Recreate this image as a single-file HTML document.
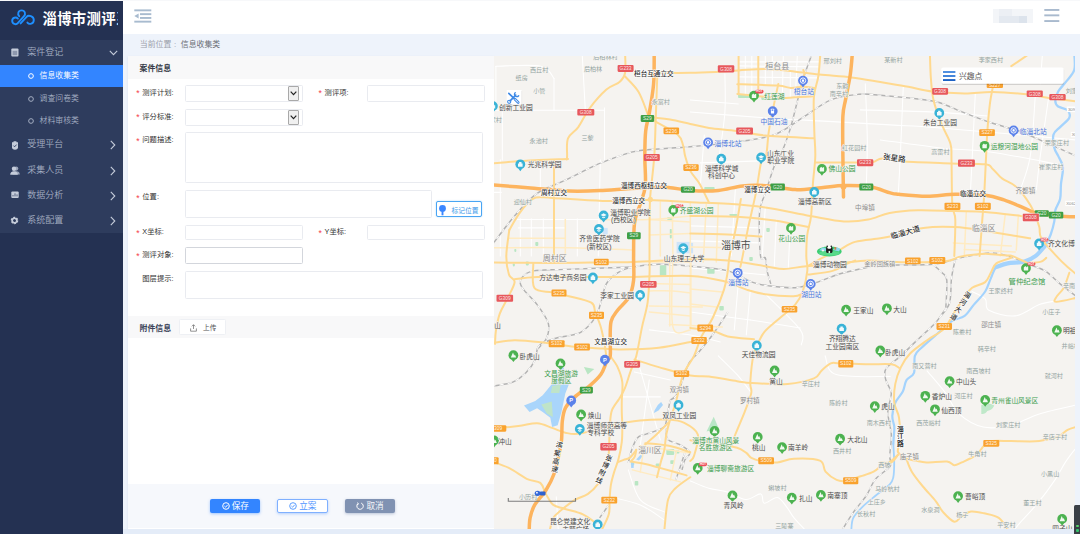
<!DOCTYPE html>
<html lang="zh-CN">
<head>
<meta charset="utf-8">
<title>淄博市测评系统</title>
<style>
*{box-sizing:border-box;margin:0;padding:0}
html,body{width:1080px;height:534px;overflow:hidden;background:#eef3fb;font-family:"Liberation Sans","Noto Sans CJK SC",sans-serif;color:#333}
.abs{position:absolute}
#side{position:absolute;left:0;top:0;width:122.7px;height:534px;background:#243152;overflow:hidden}
#logo{position:absolute;left:0;top:1px;width:122.7px;height:38.5px;background:#243152}
#logo .t{position:absolute;left:42.4px;top:6.9px;width:75.6px;overflow:hidden;font-size:14.4px;font-weight:bold;color:#fff;white-space:nowrap;letter-spacing:0.35px;line-height:22px}
.mi{position:absolute;left:0;width:122.7px;height:25.3px;background:#2e3c5d;color:#a3adc1;font-weight:350;font-size:9px;line-height:25.3px}
.mi .tx{position:absolute;left:27.3px;top:0.2px;white-space:nowrap}
.mi svg.ic{position:absolute;left:10.8px;top:8.4px}
.mi svg.ar{position:absolute;left:108.6px;top:10.6px}
.si{position:absolute;left:0;width:122.7px;height:22.5px;background:#2e3c5d;color:#a3adc1;font-weight:350;font-size:7.9px;line-height:22.5px}
.si .tx{position:absolute;left:39.5px;top:0.3px;white-space:nowrap}
.si svg{position:absolute;left:26.5px;top:7.3px}
.si.on{background:#3385ff;color:#fff}

#head{position:absolute;left:122.7px;top:0;width:957.3px;height:33.8px;background:#fff;border-top:1px solid #f4f4f4}
#crumb{position:absolute;left:139.8px;top:34.4px;height:22px;line-height:21.5px;font-size:7.9px;color:#9aa0aa;white-space:nowrap}
#crumb b{font-weight:normal;color:#6b6f76}
#card{position:absolute;left:128px;top:56.2px;width:365.8px;height:472.4px;background:#fff;box-shadow:0 1px 2px rgba(120,140,180,.18)}
.ch{position:absolute;left:0;width:365.8px;background:#f8f8f9;font-size:7.9px;font-weight:bold;color:#363b47}
.ch span{position:absolute;left:11.5px;white-space:nowrap}
.lb{position:absolute;font-size:7.3px;color:#2f2f2f;white-space:nowrap;line-height:10px;margin-top:0.5px}
.lb em{position:absolute;left:-6px;top:0.6px;color:#f5404a;font-style:normal;font-size:8.6px}
.in{position:absolute;background:#fff;border:1px solid #e9ebf0;border-radius:1.5px}
.dd{position:absolute;width:11px;height:15.4px;right:2.4px;top:0px;background:#f0f0f0;border:1px solid #a9a9a9;border-radius:1px}
.btn{position:absolute;height:14.8px;border-radius:2px;font-size:8.6px;line-height:14.6px;text-align:center;white-space:nowrap}
</style>
</head>
<body>
<!-- SIDEBAR -->
<div class="abs" style="left:0;top:0;width:1080px;height:1px;background:#f7f8fa;z-index:5"></div>
<div id="side">
  <div id="logo">
    <svg class="abs" style="left:10.5px;top:8px" width="24" height="17" viewBox="0 0 24 17"><g fill="none" stroke="#1e8fff" stroke-width="1.9" stroke-linecap="round" stroke-linejoin="round"><path d="M8.2 7.2 C6.2 5 7.2 1.4 10.6 1.4 C14 1.4 15 5 13 7.2 L6.8 14.2 C5.2 16 1.2 15.2 1.2 11.8 C1.2 8.6 5 7.6 6.9 9.6"/><path d="M9.6 14.4 L15.6 7.8 C17.4 5.8 22.8 7 22.8 11 C22.8 15 18.2 15.8 16.4 13.6"/></g></svg>
    <div class="t">淄博市测评系统</div>
  </div>
  <div class="mi" style="top:39.5px"><svg class="ic" width="8" height="9" viewBox="0 0 8 9"><rect x="0.3" y="0.6" width="7.2" height="8" rx="1" fill="#c5ccda"/><rect x="1.6" y="2.8" width="4.6" height="4.4" fill="#8d97ad"/></svg><span class="tx">案件登记</span><svg class="ar" width="9" height="6" viewBox="0 0 9 6"><path d="M0.8 0.8 L4.5 4.6 L8.2 0.8" fill="none" stroke="#c5ccda" stroke-width="1.1"/></svg></div>
  <div class="si on" style="top:64.8px"><svg width="8" height="8" viewBox="0 0 8 8"><circle cx="4" cy="4" r="2.35" fill="none" stroke="#fff" stroke-width="1"/></svg><span class="tx">信息收集类</span></div>
  <div class="si" style="top:87.3px"><svg width="8" height="8" viewBox="0 0 8 8"><circle cx="4" cy="4" r="2.35" fill="none" stroke="#a3adc1" stroke-width="1"/></svg><span class="tx">调查问卷类</span></div>
  <div class="si" style="top:109.8px;height:22.6px"><svg width="8" height="8" viewBox="0 0 8 8"><circle cx="4" cy="4" r="2.35" fill="none" stroke="#a3adc1" stroke-width="1"/></svg><span class="tx">材料审核类</span></div>
  <div class="mi" style="top:132.3px"><svg class="ic" width="8" height="9" viewBox="0 0 8 9"><path d="M1 1.2 h6 v5 q0 2.4 -3 2.6 q-3 -.2 -3 -2.6z" fill="#c5ccda"/><rect x="2.4" y="0.2" width="3.2" height="1.8" rx=".6" fill="#c5ccda"/><path d="M2.4 4.6 l1.2 1.2 l2 -2.2" stroke="#2e3c5d" stroke-width=".9" fill="none"/></svg><span class="tx">受理平台</span><svg class="ar" style="left:110px;top:8px" width="6" height="10" viewBox="0 0 6 10"><path d="M0.8 0.8 L4.8 5 L0.8 9.2" fill="none" stroke="#c5ccda" stroke-width="1.1"/></svg></div>
  <div class="mi" style="top:157.6px"><svg class="ic" style="left:9.5px" width="10" height="9" viewBox="0 0 10 9"><circle cx="6.2" cy="2.6" r="2.1" fill="#9aa4b9"/><path d="M2.6 8.6 q0 -3.4 3.6 -3.4 q3.6 0 3.6 3.4z" fill="#9aa4b9"/><circle cx="4" cy="2.8" r="2.2" fill="#c5ccda"/><path d="M0.2 8.8 q0 -3.6 3.8 -3.6 q3.8 0 3.8 3.6z" fill="#c5ccda"/></svg><span class="tx">采集人员</span><svg class="ar" style="left:110px;top:8px" width="6" height="10" viewBox="0 0 6 10"><path d="M0.8 0.8 L4.8 5 L0.8 9.2" fill="none" stroke="#c5ccda" stroke-width="1.1"/></svg></div>
  <div class="mi" style="top:182.9px"><svg class="ic" style="top:8.6px" width="8" height="8" viewBox="0 0 8 8"><rect x="0.3" y="0.5" width="7.4" height="6.6" rx="1" fill="#c5ccda"/><path d="M2 5.4 v-1.4 M4 5.4 v-3 M6 5.4 v-2" stroke="#55617d" stroke-width="1"/></svg><span class="tx">数据分析</span><svg class="ar" style="left:110px;top:8px" width="6" height="10" viewBox="0 0 6 10"><path d="M0.8 0.8 L4.8 5 L0.8 9.2" fill="none" stroke="#c5ccda" stroke-width="1.1"/></svg></div>
  <div class="mi" style="top:208.2px"><svg class="ic" style="left:9.6px;top:8px" width="9" height="9" viewBox="0 0 9 9"><circle cx="4.5" cy="4.5" r="2.7" fill="none" stroke="#c5ccda" stroke-width="2.2" stroke-dasharray="1.6 1.23"/><circle cx="4.5" cy="4.5" r="2.3" fill="none" stroke="#c5ccda" stroke-width="1.6"/></svg><span class="tx">系统配置</span><svg class="ar" style="left:110px;top:8px" width="6" height="10" viewBox="0 0 6 10"><path d="M0.8 0.8 L4.8 5 L0.8 9.2" fill="none" stroke="#c5ccda" stroke-width="1.1"/></svg></div>
</div>

<!-- HEADER -->
<div id="head">
  <svg class="abs" style="left:11.5px;top:8.4px" width="18" height="14" viewBox="0 0 18 14"><g fill="#a8bbcf"><rect x="0.3" y="0.4" width="17" height="1.9"/><rect x="6" y="4.2" width="11.3" height="1.9"/><rect x="6" y="8" width="11.3" height="1.9"/><rect x="0.3" y="11.7" width="17" height="1.9"/><path d="M0.3 7 L4.6 4.4 L4.6 9.6z"/></g></svg>
  <div class="abs" style="left:870.2px;top:8.4px;width:40.5px;height:13.6px;background:#f3f5f8"></div>
  <div class="abs" style="left:876.7px;top:8.4px;width:12.6px;height:6.6px;background:#eceff4"></div>
  <div class="abs" style="left:876.7px;top:15px;width:27.3px;height:7px;background:#e4e9f0"></div>
  <div class="abs" style="left:896.7px;top:15px;width:7.3px;height:7px;background:#dce3ec"></div>
  <svg class="abs" style="left:921.5px;top:6.8px" width="16" height="15" viewBox="0 0 16 15"><g fill="#a9bace"><rect x="0.3" y="1" width="15" height="1.9"/><rect x="0.3" y="6.4" width="15" height="1.9"/><rect x="0.3" y="12.1" width="15" height="1.9"/></g></svg>
</div>
<div id="crumb">当前位置<span style="margin:0 4.6px 0 2.6px">:</span><b>信息收集类</b></div>

<!-- FORM CARD -->
<div id="card">
  <div class="ch" style="top:0;height:22.4px;line-height:22.4px"><span style="top:1.6px">案件信息</span></div>
  <div class="lb" style="left:14.3px;top:31.2px"><em>*</em>测评计划:</div>
  <div class="in" style="left:56.6px;top:28.9px;width:118px;height:16.8px"><div class="dd"><svg class="abs" style="left:1.2px;top:4.4px" width="7" height="5" viewBox="0 0 7 5"><path d="M0.7 0.7 L3.5 3.6 L6.3 0.7" fill="none" stroke="#222" stroke-width="1.2"/></svg></div></div>
  <div class="lb" style="left:196.6px;top:31.2px"><em>*</em>测评项:</div>
  <div class="in" style="left:239.3px;top:28.9px;width:118.2px;height:16.8px"></div>
  <div class="lb" style="left:14.3px;top:55.1px"><em>*</em>评分标准:</div>
  <div class="in" style="left:56.6px;top:52.8px;width:118px;height:16.8px"><div class="dd"><svg class="abs" style="left:1.2px;top:4.4px" width="7" height="5" viewBox="0 0 7 5"><path d="M0.7 0.7 L3.5 3.6 L6.3 0.7" fill="none" stroke="#222" stroke-width="1.2"/></svg></div></div>
  <div class="lb" style="left:14.3px;top:78.8px"><em>*</em>问题描述:</div>
  <div class="in" style="left:56.6px;top:76px;width:298.4px;height:50.8px"></div>
  <div class="lb" style="left:14.3px;top:135.8px"><em>*</em>位置:</div>
  <div class="in" style="left:56.6px;top:133.8px;width:247.2px;height:28px"></div>
  <div class="btn" style="left:308.1px;top:144.9px;width:45.7px;height:16.2px;border:1px solid #49a5f3;box-shadow:0 0 1.5px rgba(73,165,243,.6);background:#fff;color:#3b98ea;font-size:6.75px;line-height:17.6px;text-align:left;padding-left:14.5px"><svg class="abs" style="left:2.2px;top:2.6px" width="7" height="11" viewBox="0 0 7 11"><circle cx="3.5" cy="3.5" r="3.4" fill="#3a86ff"/><rect x="2.55" y="6.6" width="1.9" height="3.7" fill="#3a86ff"/></svg>标记位置</div>
  <div class="lb" style="left:14.3px;top:170.6px"><em>*</em>X坐标:</div>
  <div class="in" style="left:56.6px;top:168.6px;width:118px;height:15.6px"></div>
  <div class="lb" style="left:196.6px;top:170.6px"><em>*</em>Y坐标:</div>
  <div class="in" style="left:239.3px;top:168.6px;width:118.2px;height:15.6px"></div>
  <div class="lb" style="left:14.3px;top:193.6px"><em>*</em>测评对象:</div>
  <div class="in" style="left:56.6px;top:191px;width:118px;height:17px;border-color:#d3d6dc"></div>
  <div class="lb" style="left:14.3px;top:217.4px">图层提示:</div>
  <div class="in" style="left:56.6px;top:215px;width:298.4px;height:27.6px"></div>
  <div class="ch" style="top:259.4px;height:22.4px;line-height:22.4px"><span style="top:2.8px;color:#3a4358">附件信息</span>
    <div class="abs" style="left:51.4px;top:3.9px;width:47px;height:15.4px;background:#fff;border:1px solid #eef0f4;border-radius:1.5px;font-weight:normal;font-size:6.7px;line-height:15.4px;color:#555"><svg class="abs" style="left:9.8px;top:3.4px" width="7" height="8" viewBox="0 0 7 8"><path d="M3.5 5 V0.8 M1.9 2.3 L3.5 0.7 L5.1 2.3 M0.6 4.4 V7.2 H6.4 V4.4" fill="none" stroke="#666" stroke-width=".7"/></svg><span style="left:22.6px;top:-0.2px">上传</span></div>
  </div>
  <div class="abs" style="left:0;top:427.8px;width:366px;height:44.2px;background:#f6f8fc"></div>
  <div class="btn" style="left:82px;top:442.5px;width:50.4px;background:#3385ff;color:#fff;box-shadow:0 1px 3px rgba(51,133,255,.45)"><svg style="position:relative;top:1.1px;margin-right:2.2px" width="8" height="8" viewBox="0 0 8 8"><circle cx="4" cy="4" r="3.3" fill="none" stroke="#fff" stroke-width="1"/><path d="M2.4 4 L3.6 5.2 L5.7 2.8" fill="none" stroke="#fff" stroke-width="1"/></svg>保存</div>
  <div class="btn" style="left:149.4px;top:442.5px;width:50.6px;background:#fff;color:#4f95ff;border:1px solid #7fb0ff;line-height:12.8px;box-shadow:0 1px 3px rgba(51,133,255,.35)"><svg style="position:relative;top:1.1px;margin-right:2.2px" width="8" height="8" viewBox="0 0 8 8"><circle cx="4" cy="4" r="3.3" fill="none" stroke="#5c9dff" stroke-width="1"/><path d="M2.4 4 L3.6 5.2 L5.7 2.8" fill="none" stroke="#5c9dff" stroke-width="1"/></svg>立案</div>
  <div class="btn" style="left:216.6px;top:442.5px;width:50.6px;background:#8092b2;color:#f4f6fa;box-shadow:0 1px 3px rgba(110,130,170,.45)"><svg style="position:relative;top:1.1px;margin-right:2.2px" width="8" height="8" viewBox="0 0 8 8"><path d="M2.2 1.5 A3.2 3.2 0 1 0 5.2 1.1" fill="none" stroke="#fff" stroke-width="1"/><path d="M1.1 0.6 L2.5 1.9 L0.9 2.9" fill="none" stroke="#fff" stroke-width=".9"/></svg>取消</div>
</div>

<!-- MAP -->
<div id="map" class="abs" style="left:493.7px;top:56.1px;width:581.3px;height:472.6px;background:#f5f3f0;overflow:hidden">
<!--MAPSVG-->
<svg width="581.3" height="472.6" viewBox="493.7 56.1 581.3 472.6" style="position:absolute;left:0;top:0;display:block" font-family="Liberation Sans, Noto Sans CJK SC, sans-serif">
<rect x="490" y="50" width="600" height="490" fill="#f5f3f0"/>
<g fill="none" stroke="#fff" stroke-width="1.05" stroke-linecap="round" stroke-linejoin="round">
<path d="M494.7 110.3 L604.2 110.3"/>
<path d="M604.2 108.0 L604.2 160.0"/>
<path d="M553.7 78.5 L553.7 110.3"/>
<path d="M495.6 66.3 C503.1 66.3 530.9 64.3 540.6 66.3 C550.3 68.3 551.5 76.5 553.7 78.5"/>
<path d="M495.6 66.3 L495.6 110.3"/>
<path d="M502.0 110.3 L502.0 160.0"/>
<path d="M500.0 160.0 L500.0 256.0"/>
<path d="M517.0 219.7 L600.0 219.7"/>
<path d="M494.0 192.5 L501.0 192.5"/>
<path d="M582.0 56.0 L585.0 110.0"/>
<path d="M540.0 160.0 L540.0 198.0"/>
<path d="M600.0 160.0 L598.0 256.0"/>
<path d="M520.0 219.0 L520.0 256.0"/>
<path d="M531.0 219.0 L531.0 256.0"/>
<path d="M543.0 219.0 L543.0 256.0"/>
<path d="M577.0 219.0 L577.0 256.0"/>
<path d="M518.0 228.0 L565.0 228.0"/>
<path d="M724.6 73.8 C724.6 80.2 725.5 98.5 724.6 112.2 C723.7 125.9 719.9 148.7 719.0 156.0"/>
<path d="M690.0 112.0 C702.5 113.0 743.5 116.5 765.0 118.0 C786.5 119.5 810.0 120.5 819.0 121.0"/>
<path d="M819.0 121.0 C830.8 121.7 869.8 123.8 890.0 125.0 C910.2 126.2 909.2 125.5 940.0 128.0 C970.8 130.5 1052.5 138.0 1075.0 140.0"/>
<path d="M690.0 100.0 L738.0 104.0"/>
<path d="M865.0 84.0 C865.3 93.3 866.8 123.0 867.0 140.0 C867.2 157.0 866.2 178.3 866.0 186.0"/>
<path d="M903.0 86.0 C902.5 97.7 900.8 138.0 900.0 156.0 C899.2 174.0 898.3 187.7 898.0 194.0"/>
<path d="M975.0 94.0 C974.5 104.3 972.8 139.2 972.0 156.0 C971.2 172.8 970.3 188.5 970.0 195.0"/>
<path d="M1035.0 96.0 C1034.2 106.0 1032.5 140.3 1030.0 156.0 C1027.5 171.7 1021.7 184.3 1020.0 190.0"/>
<path d="M880.0 140.0 C890.0 141.3 921.7 146.0 940.0 148.0 C958.3 150.0 970.0 149.2 990.0 152.0 C1010.0 154.8 1048.3 162.8 1060.0 165.0"/>
<path d="M860.0 110.0 C871.7 110.3 908.8 111.0 930.0 112.0 C951.2 113.0 977.5 115.3 987.0 116.0"/>
<path d="M745.0 56.0 L745.0 98.0"/>
<path d="M751.5 56.0 L751.5 98.0"/>
<path d="M765.0 56.0 L765.0 84.0"/>
<path d="M790.0 71.0 L790.0 98.0"/>
<path d="M738.0 62.0 L819.0 62.0"/>
<path d="M772.0 56.0 L772.0 84.0"/>
<path d="M783.0 56.0 L782.0 98.0"/>
<path d="M797.0 56.0 L795.0 98.0"/>
<path d="M738.0 77.0 L819.0 78.0"/>
<path d="M738.0 66.0 L819.0 67.0"/>
<path d="M760.0 161.0 L700.0 163.0"/>
<path d="M704.0 135.0 L700.0 186.0"/>
<path d="M735.0 190.0 L731.0 256.0"/>
<path d="M765.0 207.0 L762.0 256.0"/>
<path d="M776.0 220.0 L774.0 266.0"/>
<path d="M790.0 225.0 L788.0 268.0"/>
<path d="M690.0 226.0 L760.0 228.0"/>
<path d="M690.0 241.0 L760.0 243.0"/>
<path d="M690.0 268.0 L765.0 275.0"/>
<path d="M690.0 312.0 L750.0 320.0"/>
<path d="M738.0 283.0 L734.0 330.0"/>
<path d="M750.0 290.0 L746.0 335.0"/>
<path d="M765.0 294.0 C770.8 300.0 794.0 321.5 800.0 330.0 C806.0 338.5 800.8 342.5 801.0 345.0"/>
<path d="M750.0 320.0 L800.0 328.0"/>
<path d="M649.0 330.0 C655.8 330.8 678.2 333.0 690.0 335.0 C701.8 337.0 715.0 340.8 720.0 342.0"/>
<path d="M636.0 356.0 L660.0 440.0"/>
<path d="M649.0 380.0 L640.0 445.0"/>
<path d="M622.0 397.0 L660.0 397.0"/>
<path d="M634.0 372.0 L670.0 380.0"/>
<path d="M718.0 356.0 C721.1 359.1 731.5 368.8 736.8 374.7 C742.1 380.6 747.8 388.8 750.0 391.6"/>
<path d="M824.8 356.0 C826.7 359.1 825.1 371.3 836.0 374.7 C846.9 378.1 881.0 376.3 890.0 376.6"/>
<path d="M971.8 291.6 C974.0 292.8 982.1 295.9 984.9 299.0 C987.7 302.1 983.6 307.5 988.6 310.3 C993.6 313.1 1006.4 316.9 1014.8 316.0 C1023.2 315.1 1032.1 307.2 1039.0 304.7 C1045.9 302.2 1053.2 301.6 1056.0 301.0"/>
<path d="M926.8 371.0 C929.9 374.8 940.2 386.3 945.5 393.5 C950.8 400.7 952.5 408.4 958.7 414.0 C965.0 419.6 974.3 425.3 983.0 427.2 C991.7 429.1 1001.7 427.5 1011.0 425.3 C1020.3 423.1 1027.8 417.4 1039.0 414.0 C1050.2 410.6 1071.5 406.2 1078.0 404.7"/>
<path d="M690.0 481.0 C693.1 482.2 702.3 486.6 708.5 488.4 C714.7 490.2 720.8 490.1 727.0 492.0 C733.2 493.9 740.0 499.3 745.6 499.6 C751.2 499.9 757.3 493.4 760.4 494.0 C763.5 494.6 761.2 502.7 764.0 503.3 C766.8 503.9 773.3 497.1 777.0 497.7 C780.7 498.3 783.5 503.6 786.3 507.0 C789.1 510.4 790.6 514.2 793.7 518.0 C796.8 521.8 802.9 528.0 804.8 530.0"/>
<path d="M1074.4 449.6 C1072.8 451.8 1068.4 457.3 1065.0 462.5 C1061.6 467.7 1058.6 474.2 1054.0 481.0 C1049.4 487.8 1043.0 496.5 1037.4 503.3 C1031.9 510.1 1024.6 517.3 1020.7 521.8 C1016.8 526.2 1015.1 528.6 1014.0 530.0"/>
<path d="M628.0 470.0 C630.0 475.0 634.0 493.0 640.0 500.0 C646.0 507.0 660.0 510.0 664.0 512.0"/>
<path d="M610.0 497.0 C615.0 498.3 631.0 501.2 640.0 505.0 C649.0 508.8 660.0 517.5 664.0 520.0"/>
<path d="M556.0 497.0 L558.0 530.0"/>
<path d="M1042.0 56.0 L1040.0 84.0"/>
<path d="M1048.0 100.0 C1046.7 109.3 1042.0 141.0 1040.0 156.0 C1038.0 171.0 1036.7 184.3 1036.0 190.0"/>
</g>
<g fill="#b9e6c3">
<rect x="737.8" y="94.4" width="14.0" height="3.8" rx="0.8"/>
<rect x="761" y="96" width="22.6" height="4.0" rx="0.8"/>
<rect x="704" y="187" width="10.3" height="3.6" rx="0.8"/>
<rect x="659.5" y="265.4" width="6.5" height="11.2" rx="0.8"/>
<rect x="706.9" y="268" width="7.4" height="5.8" rx="0.8"/>
<rect x="666" y="449" width="7.9" height="6.0" rx="0.8"/>
<rect x="675.2" y="450.5" width="3.9" height="3.2" rx="0.8"/>
<rect x="655.5" y="463.6" width="4.0" height="3.2" rx="0.8"/>
<rect x="670" y="460.3" width="3.9" height="3.9" rx="0.8"/>
<rect x="630.6" y="461.6" width="3.3" height="3.9" rx="0.8"/>
<rect x="634.4" y="481" width="3.6" height="4.7" rx="0.8"/>
<rect x="667" y="217" width="5.5" height="3.5" rx="0.8"/>
<rect x="669.5" y="229" width="2.0" height="9.5" rx="0.8"/>
<rect x="729" y="214" width="8.0" height="2.0" rx="0.8"/>
<rect x="766" y="228" width="3.5" height="4.0" rx="0.8"/>
<rect x="749" y="257" width="3.5" height="4.0" rx="0.8"/>
<rect x="719" y="306" width="4.5" height="4.5" rx="0.8"/>
<rect x="512.5" y="263.5" width="2.0" height="3.0" rx="0.8"/>
<rect x="525.5" y="261.5" width="3.0" height="4.0" rx="0.8"/>
<rect x="535" y="242" width="3.0" height="4.0" rx="0.8"/>
<rect x="514" y="249" width="2.0" height="3.0" rx="0.8"/>
<path d="M551.8 386 L561.2 384 L559.3 393.5 L550 393.5Z"/>
<path d="M540.6 404.7 L551.8 401 L552.7 417.8 L546.2 414 L541 408Z"/>
<path d="M583.6 367.2 L594 369 L587.4 374.7Z"/>
<path d="M713.4 416.8 L706.2 431.5 L718.5 428.5Z" fill="#b9e6c6"/>
<path d="M981 405 Q988 402 994 405.5 Q992 410 987 411 Q985 414.5 981 414Z" fill="#bfe8c9"/>
</g>
<g fill="#a9d5fb">
<path d="M563 367.2 L568.7 384 L565 393.5 L561.2 412.2 L557.4 425.3 L551.8 427.2 L550 417.8 L542.4 412.2 L536.8 408.4 L529.3 412.2 L523.7 405.6 L535 401 L542.4 395.3 L550 386 L557.4 376.6 L560.2 367.2Z"/>
<path d="M660.8 402 L662.7 405.2 L658.2 410.5 L653.6 413 L654.2 410.5 L657.5 405.2Z"/>
<path d="M640 455 L642.6 456 L638.6 460.6 L635.9 459.6Z"/>
<rect x="630.8" y="462.5" width="2.6" height="5.5"/>
</g>
<g fill="#cfe4f8"><rect x="602.4" y="228" width="5" height="6.6"/><rect x="676.3" y="242" width="13.7" height="11.4"/><rect x="690" y="243" width="2.8" height="10.4"/></g>
<g fill="#c2e6c4" opacity=".9"><path d="M551.8 386 L560.5 384.5 L559 393 L550.5 393Z"/><path d="M541 404.7 L551.5 401.5 L552.5 417 L546.5 413.5Z"/></g>
<g fill="none" stroke="#b2b2b2" stroke-width="1.45">
<path d="M619.2 156.0 C622.6 155.1 628.0 152.1 639.8 150.6 C651.6 149.1 673.8 148.2 690.0 146.8 C706.2 145.4 722.8 144.0 736.8 142.0 C750.8 140.0 763.4 138.7 774.3 134.7 C785.2 130.7 793.0 123.6 802.4 117.8 C811.8 112.0 821.1 103.9 830.5 100.0 C839.9 96.1 850.2 95.2 858.5 94.4 C866.8 93.6 871.8 94.7 880.0 95.3 C888.2 95.9 898.6 96.9 908.0 98.0 C917.4 99.1 926.8 99.4 936.2 101.9 C945.6 104.4 954.9 109.4 964.3 113.0 C973.7 116.6 983.0 120.3 992.4 123.4 C1001.8 126.5 1011.0 128.4 1020.4 131.8 C1029.8 135.2 1038.9 139.8 1048.5 144.0 C1058.1 148.2 1073.1 154.8 1078.0 157.0"/>
<path d="M811.7 54.0 C810.2 58.4 804.9 72.2 802.4 80.3 C799.9 88.4 798.9 94.3 796.7 102.8 C794.5 111.2 792.1 122.1 789.3 131.0 C786.5 139.9 782.5 150.3 780.0 156.0 C777.5 161.7 776.8 159.2 774.3 165.4 C771.8 171.7 767.5 185.7 765.0 193.5 C762.5 201.3 760.1 201.6 759.3 212.0 C758.5 222.4 759.2 248.3 760.2 256.0 C761.2 263.7 763.9 255.5 765.0 258.0 C766.1 260.5 765.9 266.7 766.8 271.0 C767.7 275.3 769.9 281.8 770.5 284.0"/>
<path d="M619.2 156.0 C615.2 157.6 603.9 161.3 594.9 165.4 C585.9 169.5 574.7 175.6 565.0 180.3 C555.3 185.0 545.2 187.6 536.8 193.5 C528.3 199.4 521.9 207.2 514.3 216.0 C506.7 224.8 494.9 241.0 491.0 246.0"/>
<path d="M1078.0 298.0 C1075.0 295.7 1065.3 288.5 1059.8 284.0 C1054.3 279.5 1050.4 274.4 1044.8 271.0 C1039.2 267.6 1032.2 266.0 1026.0 263.5 C1019.8 261.0 1013.3 257.8 1007.3 256.0 C1001.3 254.2 997.9 252.7 990.0 253.0 C982.1 253.3 969.6 256.1 960.0 258.0 C950.4 259.9 945.7 263.2 932.4 264.4 C919.1 265.6 890.8 264.9 880.0 265.4 C869.2 265.9 874.6 265.8 867.9 267.2 C861.2 268.6 848.2 271.3 839.8 273.8 C831.4 276.3 824.8 279.9 817.3 282.2 C809.8 284.5 803.0 287.2 794.9 287.8 C786.8 288.4 775.8 286.9 768.6 286.0 C761.4 285.1 758.6 284.7 751.8 282.2 C744.9 279.7 737.8 273.6 727.5 271.0 C717.2 268.4 701.5 267.4 690.0 266.3 C678.5 265.2 668.1 264.2 658.5 264.4 C648.9 264.5 639.2 265.8 632.3 267.2 C625.4 268.6 621.7 270.1 617.3 272.9 C612.9 275.7 608.8 279.0 606.0 284.0 C603.2 289.0 602.4 297.2 600.5 302.8 C598.6 308.4 598.3 312.8 594.9 317.8 C591.5 322.8 586.5 329.4 579.9 332.8 C573.3 336.2 562.4 336.2 555.5 338.4 C548.6 340.6 542.1 342.3 538.7 345.9 C535.3 349.4 537.2 355.2 535.0 359.7 C532.8 364.2 529.4 369.1 525.6 372.9 C521.9 376.6 518.3 379.9 512.5 382.2 C506.7 384.5 494.6 385.8 491.0 386.5"/>
<path d="M632.3 267.2 C621.1 267.6 581.5 268.9 565.0 269.5 C548.5 270.1 540.3 269.5 533.0 271.0 C525.7 272.5 522.9 275.7 521.0 278.5 C519.1 281.3 519.2 283.4 521.8 287.8 C524.4 292.2 532.4 298.8 536.8 304.7 C541.2 310.6 546.4 317.8 548.0 323.4 C549.6 329.0 548.1 334.0 546.2 338.4 C544.3 342.8 538.4 347.7 536.8 349.6"/>
<path d="M932.4 264.4 C934.0 265.8 939.4 270.2 941.8 272.9 C944.1 275.5 945.9 274.4 946.5 280.3 C947.1 286.2 945.7 303.7 945.5 308.4"/>
<path d="M727.5 312.2 C725.0 315.9 717.5 327.7 712.5 334.6 C707.5 341.5 701.5 348.6 697.5 353.4 C693.5 358.2 691.9 356.8 688.5 363.5 C685.1 370.2 680.4 387.4 677.3 393.5 C674.2 399.6 671.2 398.9 670.0 400.0"/>
<path d="M945.5 308.4 C943.9 310.7 941.1 316.4 936.0 322.0 C930.9 327.6 920.9 336.3 915.0 342.0 C909.1 347.7 905.5 351.5 900.6 356.0 C895.7 360.5 888.1 364.9 885.6 369.0 C883.1 373.1 884.7 376.2 885.6 380.3 C886.5 384.4 890.7 388.2 891.0 393.5 C891.3 398.8 887.5 405.3 887.5 412.2 C887.5 419.1 890.7 427.3 891.0 434.6 C891.3 441.9 889.6 450.7 889.4 456.0 C889.2 461.3 892.4 462.3 890.0 466.2 C887.6 470.1 879.2 474.2 875.2 479.2 C871.2 484.1 869.6 490.3 865.9 495.9 C862.2 501.4 857.0 506.8 853.0 512.5 C849.0 518.2 843.8 527.1 841.9 530.0"/>
<path d="M684.4 453.3 L675.2 481.0"/>
<path d="M954.9 259.7 C954.3 262.8 952.1 271.3 951.2 278.5 C950.3 285.7 951.2 296.4 949.3 302.8 C947.4 309.2 941.5 314.6 940.0 317.0"/>
<path d="M670.0 400.0 C669.5 402.2 668.2 408.7 667.3 413.0 C666.4 417.3 666.2 423.2 664.7 426.0 C663.2 428.8 661.0 428.7 658.0 430.0 C655.0 431.3 649.6 432.9 646.4 434.0 C643.1 435.1 640.5 435.4 638.5 436.7 C636.5 438.0 635.9 439.4 634.6 442.0 C633.3 444.6 631.7 448.9 630.6 452.4 C629.5 455.9 628.4 461.2 628.0 463.0"/>
<path d="M666.0 428.8 C666.2 430.6 665.1 436.7 667.3 439.3 C669.5 441.9 675.3 442.4 679.0 444.6 C682.7 446.8 688.7 449.8 689.6 452.4 C690.5 455.0 685.7 457.4 684.4 460.3 C683.1 463.2 682.2 468.4 681.7 470.0"/>
<path d="M608.5 505.0 L599.3 518.0"/>
</g><g fill="none" stroke="#fcfbfa" stroke-width="1.15" stroke-dasharray="4 4.2">
<path d="M619.2 156.0 C622.6 155.1 628.0 152.1 639.8 150.6 C651.6 149.1 673.8 148.2 690.0 146.8 C706.2 145.4 722.8 144.0 736.8 142.0 C750.8 140.0 763.4 138.7 774.3 134.7 C785.2 130.7 793.0 123.6 802.4 117.8 C811.8 112.0 821.1 103.9 830.5 100.0 C839.9 96.1 850.2 95.2 858.5 94.4 C866.8 93.6 871.8 94.7 880.0 95.3 C888.2 95.9 898.6 96.9 908.0 98.0 C917.4 99.1 926.8 99.4 936.2 101.9 C945.6 104.4 954.9 109.4 964.3 113.0 C973.7 116.6 983.0 120.3 992.4 123.4 C1001.8 126.5 1011.0 128.4 1020.4 131.8 C1029.8 135.2 1038.9 139.8 1048.5 144.0 C1058.1 148.2 1073.1 154.8 1078.0 157.0"/>
<path d="M811.7 54.0 C810.2 58.4 804.9 72.2 802.4 80.3 C799.9 88.4 798.9 94.3 796.7 102.8 C794.5 111.2 792.1 122.1 789.3 131.0 C786.5 139.9 782.5 150.3 780.0 156.0 C777.5 161.7 776.8 159.2 774.3 165.4 C771.8 171.7 767.5 185.7 765.0 193.5 C762.5 201.3 760.1 201.6 759.3 212.0 C758.5 222.4 759.2 248.3 760.2 256.0 C761.2 263.7 763.9 255.5 765.0 258.0 C766.1 260.5 765.9 266.7 766.8 271.0 C767.7 275.3 769.9 281.8 770.5 284.0"/>
<path d="M619.2 156.0 C615.2 157.6 603.9 161.3 594.9 165.4 C585.9 169.5 574.7 175.6 565.0 180.3 C555.3 185.0 545.2 187.6 536.8 193.5 C528.3 199.4 521.9 207.2 514.3 216.0 C506.7 224.8 494.9 241.0 491.0 246.0"/>
<path d="M1078.0 298.0 C1075.0 295.7 1065.3 288.5 1059.8 284.0 C1054.3 279.5 1050.4 274.4 1044.8 271.0 C1039.2 267.6 1032.2 266.0 1026.0 263.5 C1019.8 261.0 1013.3 257.8 1007.3 256.0 C1001.3 254.2 997.9 252.7 990.0 253.0 C982.1 253.3 969.6 256.1 960.0 258.0 C950.4 259.9 945.7 263.2 932.4 264.4 C919.1 265.6 890.8 264.9 880.0 265.4 C869.2 265.9 874.6 265.8 867.9 267.2 C861.2 268.6 848.2 271.3 839.8 273.8 C831.4 276.3 824.8 279.9 817.3 282.2 C809.8 284.5 803.0 287.2 794.9 287.8 C786.8 288.4 775.8 286.9 768.6 286.0 C761.4 285.1 758.6 284.7 751.8 282.2 C744.9 279.7 737.8 273.6 727.5 271.0 C717.2 268.4 701.5 267.4 690.0 266.3 C678.5 265.2 668.1 264.2 658.5 264.4 C648.9 264.5 639.2 265.8 632.3 267.2 C625.4 268.6 621.7 270.1 617.3 272.9 C612.9 275.7 608.8 279.0 606.0 284.0 C603.2 289.0 602.4 297.2 600.5 302.8 C598.6 308.4 598.3 312.8 594.9 317.8 C591.5 322.8 586.5 329.4 579.9 332.8 C573.3 336.2 562.4 336.2 555.5 338.4 C548.6 340.6 542.1 342.3 538.7 345.9 C535.3 349.4 537.2 355.2 535.0 359.7 C532.8 364.2 529.4 369.1 525.6 372.9 C521.9 376.6 518.3 379.9 512.5 382.2 C506.7 384.5 494.6 385.8 491.0 386.5"/>
<path d="M632.3 267.2 C621.1 267.6 581.5 268.9 565.0 269.5 C548.5 270.1 540.3 269.5 533.0 271.0 C525.7 272.5 522.9 275.7 521.0 278.5 C519.1 281.3 519.2 283.4 521.8 287.8 C524.4 292.2 532.4 298.8 536.8 304.7 C541.2 310.6 546.4 317.8 548.0 323.4 C549.6 329.0 548.1 334.0 546.2 338.4 C544.3 342.8 538.4 347.7 536.8 349.6"/>
<path d="M932.4 264.4 C934.0 265.8 939.4 270.2 941.8 272.9 C944.1 275.5 945.9 274.4 946.5 280.3 C947.1 286.2 945.7 303.7 945.5 308.4"/>
<path d="M727.5 312.2 C725.0 315.9 717.5 327.7 712.5 334.6 C707.5 341.5 701.5 348.6 697.5 353.4 C693.5 358.2 691.9 356.8 688.5 363.5 C685.1 370.2 680.4 387.4 677.3 393.5 C674.2 399.6 671.2 398.9 670.0 400.0"/>
<path d="M945.5 308.4 C943.9 310.7 941.1 316.4 936.0 322.0 C930.9 327.6 920.9 336.3 915.0 342.0 C909.1 347.7 905.5 351.5 900.6 356.0 C895.7 360.5 888.1 364.9 885.6 369.0 C883.1 373.1 884.7 376.2 885.6 380.3 C886.5 384.4 890.7 388.2 891.0 393.5 C891.3 398.8 887.5 405.3 887.5 412.2 C887.5 419.1 890.7 427.3 891.0 434.6 C891.3 441.9 889.6 450.7 889.4 456.0 C889.2 461.3 892.4 462.3 890.0 466.2 C887.6 470.1 879.2 474.2 875.2 479.2 C871.2 484.1 869.6 490.3 865.9 495.9 C862.2 501.4 857.0 506.8 853.0 512.5 C849.0 518.2 843.8 527.1 841.9 530.0"/>
<path d="M684.4 453.3 L675.2 481.0"/>
<path d="M954.9 259.7 C954.3 262.8 952.1 271.3 951.2 278.5 C950.3 285.7 951.2 296.4 949.3 302.8 C947.4 309.2 941.5 314.6 940.0 317.0"/>
<path d="M670.0 400.0 C669.5 402.2 668.2 408.7 667.3 413.0 C666.4 417.3 666.2 423.2 664.7 426.0 C663.2 428.8 661.0 428.7 658.0 430.0 C655.0 431.3 649.6 432.9 646.4 434.0 C643.1 435.1 640.5 435.4 638.5 436.7 C636.5 438.0 635.9 439.4 634.6 442.0 C633.3 444.6 631.7 448.9 630.6 452.4 C629.5 455.9 628.4 461.2 628.0 463.0"/>
<path d="M666.0 428.8 C666.2 430.6 665.1 436.7 667.3 439.3 C669.5 441.9 675.3 442.4 679.0 444.6 C682.7 446.8 688.7 449.8 689.6 452.4 C690.5 455.0 685.7 457.4 684.4 460.3 C683.1 463.2 682.2 468.4 681.7 470.0"/>
<path d="M608.5 505.0 L599.3 518.0"/>
</g>
<path d="M1074.0 54.0 C1074.0 56.7 1075.4 65.3 1074.0 70.0 C1072.6 74.7 1068.1 78.6 1065.4 82.2 C1062.7 85.8 1059.6 88.5 1057.9 91.6 C1056.2 94.7 1055.0 98.5 1055.0 101.0 C1055.0 103.5 1055.9 105.0 1057.9 106.6 C1060.0 108.1 1065.5 108.4 1067.3 110.3 C1069.1 112.2 1070.2 115.0 1069.0 117.8 C1067.8 120.6 1062.4 124.4 1059.8 127.2 C1057.2 130.0 1054.2 131.3 1053.2 134.7 C1052.2 138.1 1053.2 144.2 1054.0 147.8 C1054.8 151.4 1056.5 152.8 1057.9 156.0 C1059.3 159.2 1062.1 162.5 1062.6 167.2 C1063.1 171.9 1061.2 178.7 1060.7 184.0 C1060.2 189.3 1060.8 194.6 1059.8 199.0 C1058.8 203.4 1056.0 206.6 1055.0 210.3 C1054.0 214.1 1054.8 217.4 1054.0 221.5 C1053.2 225.6 1051.9 230.5 1050.4 234.6 C1048.9 238.7 1047.3 242.3 1044.8 245.9 C1042.3 249.5 1038.8 253.4 1035.4 256.0 C1032.0 258.6 1026.1 260.7 1024.2 261.6" fill="none" stroke="#a4d3fd" stroke-width="2.3" stroke-linecap="round"/>
<path d="M1044.8 245.9 C1043.2 247.6 1038.8 253.4 1035.4 256.0 C1032.0 258.6 1028.9 260.4 1024.2 261.6 C1019.5 262.9 1012.0 262.6 1007.3 263.5 C1002.6 264.4 997.9 266.6 996.0 267.2" fill="none" stroke="#a4d3fd" stroke-width="4.2" stroke-linecap="round"/>
<path d="M1007.3 263.5 C1005.4 264.1 998.8 264.7 996.0 267.2 C993.2 269.7 992.4 274.4 990.5 278.5 C988.6 282.6 987.7 287.2 984.9 291.6 C982.1 296.0 977.0 300.6 973.6 304.7 C970.2 308.8 968.0 313.2 964.3 316.0 C960.6 318.8 955.9 318.4 951.2 321.5 C946.5 324.6 941.2 330.2 936.2 334.6 C931.2 339.0 924.8 344.2 921.2 347.8 C917.6 351.4 915.9 351.8 914.6 356.0 C913.4 360.2 915.1 368.8 913.7 372.9 C912.3 376.9 908.1 377.2 906.2 380.3 C904.3 383.4 904.4 387.9 902.5 391.6 C900.6 395.4 896.8 398.7 895.0 402.8 C893.2 406.9 892.2 412.0 892.0 416.0 C891.8 420.0 893.8 423.7 894.0 427.0 C894.2 430.3 893.7 433.2 893.5 436.0 C893.3 438.8 893.1 442.7 893.0 444.0" fill="none" stroke="#a4d3fd" stroke-width="2.2" stroke-linecap="round"/>
<path d="M893.0 444.0 C893.1 447.1 893.9 456.9 893.9 462.5 C893.9 468.1 893.8 473.6 893.0 477.3 C892.2 481.0 892.3 481.6 889.3 484.7 C886.3 487.8 879.7 492.2 875.2 495.9 C870.7 499.6 865.9 503.3 862.2 507.0 C858.5 510.7 854.9 514.2 853.0 518.0 C851.1 521.8 851.3 528.0 851.0 530.0" fill="none" stroke="#a4d3fd" stroke-width="1.8" stroke-linecap="round"/>
<g fill="none" stroke="#ffebc2" stroke-width="1.5" stroke-linecap="round" stroke-linejoin="round">
<path d="M508.0 238.4 L565.0 238.4"/>
<path d="M494.0 247.8 C506.5 247.8 545.8 247.4 569.0 247.8 C592.2 248.2 622.3 249.6 633.0 250.0"/>
<path d="M565.0 219.7 L565.0 256.0"/>
<path d="M600.0 219.7 C608.2 219.7 634.0 220.3 649.0 219.7 C664.0 219.1 683.2 216.6 690.0 216.0"/>
<path d="M672.6 256.0 C672.6 267.8 669.7 314.7 672.6 327.0 C675.5 339.3 687.1 329.5 690.0 330.0"/>
<path d="M690.0 202.0 L690.0 328.0"/>
<path d="M649.0 235.0 L690.0 233.7"/>
<path d="M649.0 219.7 L690.0 222.0"/>
<path d="M953.0 243.0 L1011.0 246.0"/>
<path d="M964.0 249.6 L1015.0 252.0"/>
<path d="M966.0 212.0 L964.0 256.0"/>
<path d="M1005.0 214.0 L1000.0 256.0"/>
<path d="M1018.0 216.0 L1016.0 250.0"/>
<path d="M706.0 204.0 L703.0 262.0"/>
<path d="M718.0 204.0 L716.0 262.0"/>
<path d="M690.0 247.0 L745.0 248.0"/>
<path d="M690.0 289.0 L722.0 292.0"/>
<path d="M690.0 304.0 L716.0 307.0"/>
<path d="M649.0 262.0 L690.0 262.0"/>
<path d="M649.0 291.0 C652.9 291.0 665.8 290.7 672.6 291.0 C679.4 291.3 687.1 292.7 690.0 293.0"/>
<path d="M649.0 312.0 L690.0 316.0"/>
<path d="M660.0 202.0 L660.0 256.0"/>
<path d="M669.5 262.0 L669.5 326.0"/>
<path d="M690.6 262.0 L690.6 326.0"/>
<path d="M649.0 306.0 L702.0 307.0"/>
<path d="M669.0 324.5 L722.0 327.0"/>
<path d="M649.0 283.5 L690.0 284.5"/>
<path d="M672.0 202.0 L672.6 256.0"/>
<path d="M640.0 445.9 L690.0 453.0"/>
<path d="M644.0 444.0 L640.0 472.0"/>
<path d="M676.0 452.0 L670.0 480.0"/>
<path d="M632.0 470.0 L680.0 482.0"/>
</g>
<g fill="none" stroke="#ffd98f" stroke-width="2" stroke-linecap="round" stroke-linejoin="round">
<path d="M624.8 54.0 C624.8 57.1 625.7 68.2 624.8 72.9 C623.9 77.6 622.3 79.4 619.2 82.2 C616.1 85.0 611.1 85.3 606.1 89.7 C601.1 94.1 594.0 102.2 589.3 108.4 C584.6 114.7 581.6 122.2 578.0 127.2 C574.4 132.2 569.6 133.6 567.7 138.4 C565.8 143.2 567.0 152.5 566.8 156.0 C566.6 159.5 566.5 158.9 566.5 159.5"/>
<path d="M567.7 159.0 C562.9 159.2 547.6 159.6 538.7 160.0 C529.8 160.4 522.2 161.0 514.3 161.6 C506.3 162.2 494.9 163.2 491.0 163.5"/>
<path d="M624.8 76.6 C627.0 79.1 634.2 85.4 638.0 91.6 C641.8 97.8 645.5 109.3 647.3 114.0 C649.1 118.7 648.7 119.0 649.0 120.0"/>
<path d="M655.0 72.9 C660.8 72.9 679.8 73.1 690.0 72.9 C700.2 72.8 708.0 72.4 716.0 72.0 C724.0 71.6 730.1 71.0 738.3 70.5 C746.5 70.0 756.4 68.9 765.0 69.0 C773.6 69.1 781.0 70.0 790.0 71.0 C799.0 72.0 808.8 73.6 819.0 74.7 C829.2 75.8 840.8 76.2 851.0 77.5 C861.2 78.8 870.5 80.6 880.0 82.2 C889.5 83.8 899.3 85.3 908.0 86.9 C916.7 88.5 923.0 90.5 932.4 91.6 C941.8 92.7 954.3 93.4 964.3 93.5 C974.3 93.6 982.1 91.8 992.4 92.0 C1002.7 92.2 1016.6 93.4 1026.0 94.4 C1035.3 95.4 1039.8 96.8 1048.5 98.0 C1057.2 99.2 1073.1 101.2 1078.0 101.9"/>
<path d="M654.8 117.8 C657.3 118.1 663.9 118.7 669.8 119.7 C675.7 120.7 683.5 122.6 690.0 124.0 C696.5 125.4 700.9 126.8 708.7 128.0 C716.5 129.2 727.4 129.7 736.8 131.0 C746.2 132.3 752.2 134.4 765.0 135.6 C777.8 136.8 805.5 137.9 813.6 138.4"/>
<path d="M654.8 121.5 C658.5 123.7 672.6 130.6 677.3 134.7 C682.0 138.8 681.6 142.3 682.9 145.9 C684.1 149.5 683.6 151.8 684.8 156.0 C686.0 160.2 687.6 166.3 690.0 171.0 C692.4 175.7 696.3 178.7 699.4 184.0 C702.5 189.3 707.2 199.7 708.7 202.8"/>
<path d="M738.3 54.0 L738.3 93.5"/>
<path d="M820.0 54.0 C819.7 57.8 819.1 69.4 818.0 76.6 C816.9 83.8 814.3 88.1 813.6 97.2 C812.9 106.3 813.8 121.2 814.0 131.0 C814.2 140.8 815.2 147.2 815.0 156.0 C814.8 164.8 813.3 174.0 812.6 184.0 C811.9 194.0 811.7 207.6 810.8 216.0 C809.9 224.4 807.8 227.9 807.0 234.6 C806.2 241.3 806.0 249.9 806.0 256.0 C806.0 262.1 807.6 265.1 807.0 271.0 C806.4 276.9 804.4 286.0 802.4 291.6 C800.4 297.2 798.6 300.3 794.9 304.7 C791.1 309.1 784.9 313.4 779.9 317.8 C774.9 322.2 768.6 327.0 765.0 331.0 C761.4 335.0 760.4 337.8 758.4 342.0 C756.4 346.2 754.4 349.3 753.0 356.0 C751.6 362.7 750.4 375.9 750.0 382.2 C749.6 388.4 751.9 388.5 750.9 393.5 C749.9 398.5 746.9 405.3 744.3 412.2 C741.6 419.1 737.2 429.0 735.0 434.6 C732.8 440.2 731.7 444.1 731.0 446.0"/>
<path d="M737.0 84.3 C743.7 84.5 768.1 85.1 777.0 85.7 C785.9 86.3 786.2 87.8 790.5 88.0 C794.8 88.2 799.1 86.9 803.0 86.9 C806.9 86.9 812.2 87.8 814.0 88.0"/>
<path d="M737.0 94.0 L750.0 95.3"/>
<path d="M758.0 96.4 C762.5 96.7 778.3 97.9 785.0 98.0 C791.7 98.1 793.7 97.3 798.4 97.0 C803.1 96.7 810.6 96.5 813.0 96.4"/>
<path d="M758.0 54.0 L758.0 93.0"/>
<path d="M803.0 70.0 C803.2 70.8 804.4 71.9 804.0 74.5 C803.6 77.1 801.2 83.8 800.7 85.7"/>
<path d="M778.0 84.0 C777.3 87.2 775.6 95.2 774.0 103.0 C772.4 110.8 770.0 122.2 768.6 131.0 C767.2 139.8 767.1 150.9 765.8 156.0 C764.5 161.1 762.7 155.3 761.0 161.6 C759.3 167.8 757.7 182.6 755.5 193.5 C753.3 204.4 750.2 216.6 748.0 227.0 C745.8 237.4 743.7 249.3 742.4 256.0 C741.1 262.7 740.4 265.2 740.0 267.0"/>
<path d="M929.6 54.0 C929.8 58.1 930.0 70.7 930.6 78.5 C931.2 86.3 931.5 93.2 933.4 101.0 C935.3 108.8 939.0 118.1 941.8 125.3 C944.6 132.5 948.6 138.2 950.2 144.0 C951.8 149.8 950.9 149.9 951.2 160.0 C951.5 170.1 951.4 194.8 952.0 204.7 C952.6 214.6 954.7 211.1 955.0 219.7 C955.3 228.2 954.2 249.9 954.0 256.0"/>
<path d="M992.4 87.8 C991.9 90.6 990.4 97.5 989.5 104.7 C988.6 111.9 987.7 122.4 987.1 130.9 C986.5 139.5 986.3 145.6 985.8 156.0 C985.3 166.4 984.6 182.9 984.0 193.5 C983.4 204.1 982.8 209.3 982.0 219.7 C981.2 230.1 979.8 249.9 979.3 256.0"/>
<path d="M1011.0 66.3 L1029.0 54.0"/>
<path d="M815.5 162.6 C822.7 162.6 848.9 162.7 858.5 162.6 C868.1 162.5 869.1 162.7 873.0 162.0 C876.9 161.3 876.8 158.6 882.0 158.5 C887.2 158.4 892.8 160.8 904.3 161.6 C915.8 162.4 937.8 163.0 951.2 163.5 C964.6 164.0 978.0 163.5 984.9 164.4 C991.8 165.3 989.6 166.7 992.4 169.0 C995.2 171.3 998.0 175.7 1001.7 178.5 C1005.4 181.3 1010.8 182.6 1014.8 186.0 C1018.8 189.4 1022.9 194.7 1026.0 199.0 C1029.1 203.3 1031.4 207.3 1033.6 212.0 C1035.8 216.7 1037.8 222.6 1039.0 227.0 C1040.2 231.4 1038.2 233.6 1041.0 238.4 C1043.8 243.2 1051.6 251.2 1056.0 256.0 C1060.4 260.8 1063.6 263.9 1067.3 267.2 C1071.0 270.5 1076.2 274.5 1078.0 276.0"/>
<path d="M509.0 230.0 C510.5 227.5 515.0 219.4 518.0 215.0 C521.0 210.6 524.1 206.6 527.0 203.7 C529.9 200.8 531.4 198.5 535.5 197.6 C539.6 196.7 540.6 197.4 551.8 198.0 C562.9 198.6 586.2 200.7 602.4 201.0 C618.6 201.3 634.4 199.8 649.0 200.0 C663.6 200.2 676.9 201.7 690.0 202.3 C703.1 202.9 715.0 202.9 727.5 203.8 C740.0 204.7 751.3 205.5 765.0 207.5 C778.7 209.5 796.8 213.7 809.9 216.0 C823.0 218.3 833.9 220.9 843.6 221.5 C853.3 222.1 860.3 221.1 867.9 219.7 C875.5 218.3 881.1 214.6 889.4 213.0 C897.7 211.4 906.6 210.6 917.5 210.3 C928.4 210.0 943.7 210.9 954.9 211.2 C966.1 211.5 974.0 211.2 984.9 212.0 C995.8 212.8 1011.9 215.0 1020.4 216.0 C1028.9 217.0 1033.4 217.7 1036.0 218.0"/>
<path d="M690.0 216.0 C697.8 216.2 722.8 216.1 736.8 216.9 C750.8 217.7 762.4 218.9 774.3 220.6 C786.2 222.3 802.4 226.1 808.0 227.2"/>
<path d="M690.0 233.7 C696.2 233.8 715.7 234.1 727.5 234.6 C739.3 235.1 755.4 236.2 761.0 236.5"/>
<path d="M740.6 199.0 C739.7 204.3 736.9 221.5 735.0 231.0 C733.1 240.5 730.5 249.3 729.3 256.0 C728.0 262.7 728.4 265.4 727.5 271.0 C726.6 276.6 726.2 281.9 723.7 289.7 C721.2 297.5 716.2 310.0 712.5 317.8 C708.8 325.6 704.3 330.1 701.2 336.5 C698.1 342.9 696.8 349.6 693.7 356.0 C690.7 362.4 686.0 366.9 682.9 374.7 C679.8 382.5 677.6 395.3 675.4 402.8 C673.2 410.3 671.4 414.4 669.8 419.7 C668.2 425.0 667.0 429.6 666.0 434.6 C665.0 439.7 664.9 445.4 664.0 450.0 C663.1 454.6 661.6 457.9 660.4 462.5 C659.2 467.1 657.3 474.8 656.7 477.3"/>
<path d="M808.0 266.0 C810.3 264.7 817.0 260.6 822.0 258.0 C827.0 255.4 832.5 253.3 838.0 250.6 C843.5 247.9 847.8 244.0 854.8 242.0 C861.8 240.0 872.7 239.6 880.0 238.4 C887.3 237.2 891.5 236.3 898.7 234.6 C905.9 232.9 913.6 229.2 923.0 228.0 C932.4 226.8 944.6 226.7 954.9 227.2 C965.2 227.7 974.3 229.4 984.9 231.0 C995.5 232.6 1011.1 235.3 1018.6 236.5 C1026.1 237.7 1027.9 238.1 1029.8 238.4"/>
<path d="M491.0 262.6 C500.8 262.7 533.0 263.0 550.0 263.0 C567.0 263.0 579.2 262.8 593.0 262.6 C606.8 262.4 616.8 262.5 633.0 262.0 C649.2 261.5 674.2 259.7 690.0 259.5 C705.8 259.3 715.0 259.6 727.5 260.7 C740.0 261.8 755.6 264.9 765.0 266.3 C774.4 267.7 776.8 269.0 783.6 269.0 C790.4 269.0 796.6 267.2 806.0 266.3 C815.4 265.4 829.5 264.5 839.8 263.5 C850.1 262.5 857.1 260.7 867.9 260.5 C878.6 260.3 891.4 262.2 904.3 262.3 C917.2 262.4 936.4 262.2 945.5 261.3 C954.6 260.4 953.8 258.1 958.7 257.0 C963.6 255.9 970.1 255.0 975.0 254.5 C979.9 254.0 982.7 253.8 988.0 254.0 C993.3 254.2 1002.8 255.1 1007.0 255.5 C1011.2 255.9 1009.7 255.2 1013.0 256.5 C1016.3 257.8 1024.7 261.9 1027.0 263.0"/>
<path d="M514.3 279.4 C518.0 279.0 524.6 277.4 536.8 277.0 C549.0 276.6 571.5 277.0 587.4 277.0 C603.3 277.0 615.2 277.2 632.3 277.0 C649.4 276.8 674.8 275.3 690.0 276.0 C705.2 276.7 714.3 279.0 723.7 281.3 C733.1 283.6 739.3 287.5 746.2 289.7 C753.1 291.9 757.2 293.3 765.0 294.4 C772.8 295.5 786.8 296.4 793.0 296.3 C799.2 296.2 800.8 294.0 802.4 293.5"/>
<path d="M509.0 230.0 C508.5 234.3 506.1 248.6 506.0 256.0 C505.9 263.4 507.3 270.3 508.7 274.7 C510.1 279.1 514.6 278.1 514.3 282.2 C514.0 286.2 509.4 293.7 506.9 299.0 C504.4 304.3 501.3 308.7 499.4 314.0 C497.5 319.3 496.4 326.0 495.6 331.0 C494.8 336.0 494.9 341.8 494.7 344.0"/>
<path d="M533.0 263.5 C533.2 267.6 530.9 283.0 534.0 287.8 C537.1 292.6 546.0 291.1 551.8 292.5 C557.6 293.9 562.2 294.6 568.7 296.3 C575.2 298.0 586.6 300.2 591.0 302.8 C595.4 305.4 593.3 308.1 594.9 312.2 C596.5 316.3 599.0 321.9 600.5 327.2 C602.0 332.5 603.3 339.2 604.2 344.0 C605.1 348.8 605.7 354.0 606.0 356.0"/>
<path d="M491.0 343.5 C494.9 343.0 505.1 340.4 514.3 340.3 C523.5 340.2 536.2 341.9 546.2 343.0 C556.2 344.1 564.9 345.9 574.3 346.8 C583.7 347.8 594.6 348.2 602.4 348.7 C610.2 349.2 611.6 349.8 621.0 349.6 C630.4 349.5 647.0 349.1 658.5 347.8 C670.0 346.5 682.9 343.3 690.0 342.0 C697.1 340.7 699.2 340.3 701.0 340.0"/>
<path d="M657.0 75.0 C656.8 82.0 656.0 103.5 655.5 117.0 C655.0 130.5 654.8 144.5 654.0 156.0 C653.2 167.5 651.8 177.8 651.0 186.0 C650.2 194.2 649.8 193.3 649.5 205.0 C649.2 216.7 649.2 244.4 649.2 256.0 C649.2 267.6 649.5 266.9 649.2 274.7 C648.9 282.5 648.5 294.1 647.3 302.8 C646.0 311.6 643.6 318.3 641.7 327.2 C639.8 336.1 637.9 348.7 636.0 356.0 C634.1 363.3 632.3 365.7 630.4 371.0 C628.5 376.3 626.5 383.5 624.8 387.8 C623.1 392.1 621.1 395.0 620.0 397.0 C618.9 399.0 619.6 397.8 618.2 400.0 C616.8 402.2 613.0 406.6 611.6 410.5 C610.2 414.4 610.1 418.8 609.7 423.6 C609.3 428.4 609.2 434.1 609.0 439.3 C608.8 444.5 609.2 449.4 608.3 455.0 C607.4 460.6 605.1 468.2 603.4 473.0 C601.7 477.8 600.6 480.2 598.0 483.7 C595.4 487.2 591.6 491.3 587.7 494.0 C583.8 496.7 579.2 497.2 574.6 500.0 C570.0 502.8 564.0 507.7 560.4 510.7 C556.8 513.7 554.9 514.6 553.0 518.0 C551.1 521.4 549.9 528.8 549.3 531.0"/>
<path d="M609.9 356.0 C611.1 357.9 615.3 362.8 617.3 367.2 C619.3 371.6 621.3 376.7 622.0 382.2 C622.7 387.7 621.6 394.9 621.5 400.0 C621.4 405.1 621.4 408.7 621.5 413.0 C621.6 417.3 622.0 421.2 622.0 426.0 C622.0 430.8 622.1 436.5 621.5 442.0 C620.9 447.5 619.5 454.0 618.2 459.0 C616.9 464.0 615.2 467.7 613.9 472.0 C612.6 476.3 611.4 480.3 610.6 485.0 C609.8 489.7 609.6 495.1 609.3 500.0 C608.9 504.9 609.9 509.2 608.5 514.4 C607.1 519.6 602.2 528.2 601.0 531.0"/>
<path d="M634.2 359.7 C638.2 360.9 649.2 364.6 658.5 367.2 C667.8 369.8 681.6 373.9 690.0 375.5 C698.4 377.1 700.9 375.6 708.7 376.6 C716.5 377.6 729.6 380.2 736.8 381.3 C744.0 382.4 743.4 382.8 751.8 383.2 C760.2 383.6 777.1 384.8 787.4 384.0 C797.7 383.2 808.0 380.7 813.6 378.5 C819.2 376.3 818.2 373.5 821.0 371.0 C823.8 368.5 827.4 364.8 830.5 363.5 C833.6 362.2 833.6 363.4 839.8 363.5 C846.0 363.6 859.4 364.2 867.9 364.4 C876.4 364.5 885.9 363.8 891.0 364.4 C896.1 365.0 897.4 367.4 898.7 368.0"/>
<path d="M491.0 428.7 C495.5 428.3 510.4 427.1 518.0 426.2 C525.6 425.3 531.2 423.1 536.8 423.4 C542.4 423.7 547.1 426.4 551.8 428.0 C556.5 429.6 560.3 431.9 565.0 432.8 C569.7 433.8 572.1 434.9 579.9 433.7 C587.7 432.4 601.7 427.5 611.7 425.3 C621.7 423.1 630.4 421.5 639.8 420.6 C649.2 419.7 660.6 419.3 668.0 419.7 C675.4 420.1 679.1 420.5 684.0 423.0 C688.9 425.5 695.9 429.1 697.5 434.6 C699.1 440.1 695.0 451.6 693.7 456.0 C692.5 460.4 690.6 460.2 690.0 461.0"/>
<path d="M690.0 440.3 C694.7 440.9 710.2 442.8 718.0 444.0 C725.8 445.2 732.1 446.3 736.8 447.8 C741.5 449.3 743.6 451.3 746.0 453.0 C748.4 454.7 748.6 456.6 751.0 457.9 C753.4 459.2 756.1 460.2 760.4 461.0 C764.7 461.8 771.5 462.9 777.0 462.5 C782.5 462.1 786.6 459.1 793.7 458.8 C800.8 458.5 814.4 458.5 819.6 460.7 C824.9 462.9 822.4 468.6 825.2 471.8 C828.0 475.0 832.9 478.5 836.3 480.0 C839.7 481.5 841.6 481.6 845.6 481.0 C849.6 480.4 855.8 477.9 860.4 476.4 C865.0 474.9 869.6 473.8 873.3 471.8 C877.0 469.8 879.8 466.1 882.6 464.4 C885.4 462.7 887.5 463.2 890.0 461.6 C892.5 460.0 896.3 456.1 897.6 455.0"/>
<path d="M1011.0 257.9 C1008.5 258.8 999.4 261.0 996.0 263.5 C992.6 266.0 992.4 269.8 990.5 272.9 C988.6 276.0 988.0 279.7 984.9 282.2 C981.8 284.7 975.2 285.3 971.8 287.8 C968.4 290.3 967.4 292.8 964.3 297.2 C961.2 301.6 956.4 308.7 953.0 314.0 C949.6 319.3 948.1 324.6 943.7 329.0 C939.3 333.4 932.4 336.2 926.8 340.3 C921.2 344.4 914.4 348.9 910.0 353.4 C905.6 357.9 903.1 362.1 900.6 367.2 C898.1 372.3 896.1 378.1 895.0 384.0 C893.9 389.9 893.4 397.2 894.0 402.8 C894.6 408.4 897.8 411.6 898.7 417.8 C899.7 424.1 899.9 434.9 899.7 440.3 C899.5 445.7 897.8 447.8 897.6 450.0 C897.4 452.2 897.1 451.8 898.5 453.3 C899.9 454.8 903.2 457.6 906.0 458.8 C908.8 460.0 911.8 460.1 915.2 460.7 C918.6 461.3 921.0 462.4 926.3 462.5 C931.5 462.6 942.1 461.1 946.7 461.6 C951.3 462.1 951.5 465.2 954.0 465.3 C956.5 465.4 957.8 464.2 961.5 462.5 C965.2 460.8 972.6 457.8 976.3 455.0 C980.0 452.2 981.0 448.2 983.7 445.9 C986.4 443.6 987.9 442.0 992.4 441.2 C996.9 440.4 1003.2 441.2 1011.0 441.2 C1018.8 441.2 1031.2 442.0 1039.0 441.2 C1046.8 440.4 1053.2 438.4 1057.9 436.5 C1062.6 434.6 1064.0 431.7 1067.3 430.0 C1070.6 428.3 1076.2 427.1 1078.0 426.5"/>
<path d="M906.0 458.8 C906.9 461.0 908.7 467.2 911.5 471.8 C914.3 476.4 918.6 481.7 922.6 486.6 C926.6 491.5 932.2 497.1 935.6 501.4 C939.0 505.7 939.9 509.1 943.0 512.5 C946.1 515.9 950.9 521.2 954.0 521.8 C957.1 522.4 958.7 517.9 961.5 516.2 C964.3 514.5 967.0 512.1 970.7 511.6 C974.4 511.1 979.1 512.3 983.7 513.4 C988.3 514.5 994.5 515.2 998.5 518.0 C1002.5 520.8 1006.2 528.0 1007.8 530.0"/>
<path d="M880.0 462.5 C881.8 462.5 888.1 463.8 891.0 462.5 C893.9 461.2 896.5 456.2 897.6 455.0"/>
<path d="M491.0 461.5 C493.9 462.6 502.5 465.1 508.5 468.0 C514.5 470.9 521.8 476.7 527.0 479.2 C532.2 481.7 536.9 480.5 540.0 483.0 C543.1 485.5 543.4 490.3 545.6 494.0 C547.8 497.7 549.9 502.5 553.0 505.0 C556.1 507.5 559.1 507.2 564.0 508.8 C568.9 510.4 577.6 512.2 582.6 514.4 C587.6 516.6 591.9 520.6 593.7 521.8"/>
<path d="M618.2 462.0 C619.1 461.7 621.3 460.8 623.3 460.0 C625.3 459.2 627.9 459.2 630.0 457.5 C632.1 455.8 635.0 451.2 636.0 450.0"/>
<path d="M630.6 461.6 C633.0 462.0 640.2 463.1 645.0 464.2 C649.8 465.3 652.6 466.1 659.5 468.0 C666.4 469.9 681.8 474.2 686.3 475.5"/>
<path d="M668.6 422.3 C666.8 424.1 661.5 429.5 658.0 432.8 C654.5 436.1 649.9 440.0 647.7 442.0 C645.5 444.0 645.5 444.2 645.0 444.6"/>
<path d="M645.0 443.3 C648.9 443.7 661.1 444.4 668.6 445.9 C676.1 447.4 686.4 451.3 690.0 452.4"/>
<path d="M635.9 449.8 C635.7 450.9 635.5 454.4 634.6 456.4 C633.7 458.4 631.3 460.7 630.6 461.6"/>
<path d="M690.0 477.3 C687.5 479.1 678.9 484.7 675.2 488.4 C671.5 492.1 669.7 492.5 667.8 499.6 C665.9 506.7 664.6 525.8 664.0 531.0"/>
<path d="M1069.0 272.9 C1068.1 275.4 1065.7 283.8 1063.5 287.8 C1061.3 291.9 1057.2 294.9 1056.0 297.2 C1054.8 299.5 1052.3 301.8 1056.0 301.9 C1059.7 301.9 1074.3 298.2 1078.0 297.5"/>
<path d="M553.7 160.0 L553.7 263.0"/>
<path d="M808.0 274.7 C812.0 274.1 826.1 272.7 832.3 271.0 C838.5 269.3 841.6 266.1 845.4 264.4 C849.2 262.7 853.4 261.2 855.0 260.6"/>
<path d="M690.0 328.0 C693.8 328.5 706.2 329.6 712.5 331.0 C718.8 332.4 720.6 335.1 727.5 336.5 C734.4 337.9 749.3 338.8 753.7 339.3"/>
<path d="M1027.0 263.0 C1029.2 262.8 1036.8 262.8 1040.0 262.0 C1043.2 261.2 1045.0 258.7 1046.0 258.0"/>
</g>
<g fill="none" stroke="#fdb45e" stroke-width="3.5" stroke-linecap="round" stroke-linejoin="round">
<path d="M653.9 54.0 C653.8 59.0 654.1 74.3 653.3 84.0 C652.5 93.7 650.5 104.2 649.2 112.0 C647.9 119.8 646.2 123.7 645.4 131.0 C644.6 138.3 644.6 146.8 644.5 156.0 C644.4 165.2 645.8 177.9 645.0 186.0 C644.2 194.1 641.6 198.5 639.8 204.7 C638.0 210.9 635.3 214.8 634.2 223.4 C633.1 232.0 633.4 246.5 633.3 256.0 C633.1 265.5 634.1 273.4 633.3 280.3 C632.5 287.2 631.3 292.2 628.6 297.2 C625.9 302.2 620.3 306.2 617.3 310.3 C614.3 314.4 612.0 316.5 610.8 321.5 C609.6 326.5 610.0 334.6 609.9 340.3 C609.8 346.1 610.5 352.3 609.9 356.0 C609.2 359.7 607.6 359.5 606.0 362.6 C604.4 365.7 603.3 370.8 600.5 374.7 C597.7 378.6 593.7 382.2 589.3 386.0 C584.9 389.8 578.3 393.5 574.3 397.2 C570.2 400.9 567.0 404.3 565.0 408.4 C563.0 412.4 562.6 416.2 562.0 421.5 C561.4 426.8 561.8 434.7 561.2 440.3 C560.6 445.9 559.7 449.4 558.5 455.0 C557.3 460.6 556.0 467.7 553.9 473.6 C551.8 479.5 548.9 485.1 545.6 490.3 C542.4 495.5 537.0 500.4 534.4 505.0 C531.8 509.6 530.7 513.7 529.8 518.0 C528.9 522.3 529.0 528.8 528.9 531.0"/>
<path d="M491.0 185.0 C497.1 185.5 514.5 186.8 527.5 187.8 C540.5 188.8 556.2 190.7 568.7 191.2 C581.2 191.7 589.9 191.2 602.4 190.6 C614.9 190.0 632.7 188.3 643.6 187.8 C654.5 187.3 660.3 187.0 668.0 187.5 C675.7 188.0 681.7 190.1 690.0 190.6 C698.3 191.1 709.3 191.4 718.0 190.6 C726.7 189.8 734.0 186.8 742.4 186.0 C750.8 185.2 759.9 185.4 768.6 186.0 C777.4 186.6 786.2 189.4 794.9 189.7 C803.6 190.0 812.9 188.5 821.0 187.8 C829.1 187.1 835.5 185.8 843.6 185.6 C851.7 185.4 862.1 185.7 869.8 186.9 C877.5 188.1 885.2 191.8 890.0 193.0 C894.8 194.2 892.6 193.8 898.7 194.4 C904.8 195.0 917.4 196.3 926.8 196.3 C936.2 196.3 945.2 194.6 954.9 194.4 C964.6 194.2 976.8 194.4 984.9 195.3 C993.0 196.2 997.4 198.0 1003.6 200.0 C1009.8 202.0 1017.0 205.3 1022.3 207.5 C1027.6 209.7 1029.5 211.6 1035.4 213.0 C1041.3 214.4 1050.8 215.3 1057.9 216.0 C1065.0 216.7 1074.7 216.8 1078.0 216.9"/>
<path d="M852.0 54.0 C851.7 57.5 851.1 67.2 850.0 74.7 C848.9 82.2 846.6 92.1 845.4 99.0 C844.2 105.9 843.1 106.5 842.6 116.0 C842.1 125.5 842.5 142.5 842.6 156.0 C842.7 169.5 843.1 190.2 843.2 197.0"/>
</g>
<circle cx="650" cy="199.5" r="2.6" fill="#ffd98f"/>
<circle cx="843.2" cy="186.5" r="3" fill="#fdb45e"/>
<rect x="617.3" y="65.0" width="16.0" height="7.0" rx="1.1" fill="#e7585c"/>
<text x="625.3" y="70.2" font-size="4.9" fill="#fff" fill-opacity=".88" text-anchor="middle">G233</text>
<rect x="577.0" y="109.0" width="17.0" height="6.6" rx="1.1" fill="#e7585c"/>
<text x="585.5" y="114.0" font-size="4.9" fill="#fff" fill-opacity=".88" text-anchor="middle">G308</text>
<rect x="640.4" y="115.0" width="13.5" height="7.0" rx="1.1" fill="#3f9f45"/>
<text x="647.1" y="120.2" font-size="4.9" fill="#fff" fill-opacity=".88" text-anchor="middle">S29</text>
<rect x="663.2" y="127.5" width="15.6" height="6.8" rx="1.1" fill="#f9a22e"/>
<text x="671.0" y="132.7" font-size="4.9" fill="#fff" fill-opacity=".88" text-anchor="middle">S236</text>
<rect x="643.6" y="154.0" width="15.9" height="7.2" rx="1.1" fill="#e7585c"/>
<text x="651.5" y="159.3" font-size="4.9" fill="#fff" fill-opacity=".88" text-anchor="middle">G205</text>
<rect x="717.5" y="65.4" width="16.5" height="7.1" rx="1.1" fill="#e7585c"/>
<text x="725.8" y="70.7" font-size="4.9" fill="#fff" fill-opacity=".88" text-anchor="middle">G308</text>
<rect x="735.9" y="127.7" width="16.8" height="7.0" rx="1.1" fill="#e7585c"/>
<text x="744.3" y="132.9" font-size="4.9" fill="#fff" fill-opacity=".88" text-anchor="middle">G205</text>
<rect x="931.9" y="88.2" width="15.9" height="6.6" rx="1.1" fill="#e7585c"/>
<text x="939.8" y="93.2" font-size="4.9" fill="#fff" fill-opacity=".88" text-anchor="middle">G308</text>
<rect x="1026.4" y="90.6" width="16.1" height="6.6" rx="1.1" fill="#e7585c"/>
<text x="1034.5" y="95.7" font-size="4.9" fill="#fff" fill-opacity=".88" text-anchor="middle">G308</text>
<rect x="1049.0" y="94.0" width="16.4" height="6.4" rx="1.1" fill="#e7585c"/>
<text x="1057.2" y="99.0" font-size="4.9" fill="#fff" fill-opacity=".88" text-anchor="middle">G308</text>
<rect x="978.9" y="129.4" width="15.7" height="6.7" rx="1.1" fill="#f9a22e"/>
<text x="986.8" y="134.5" font-size="4.9" fill="#fff" fill-opacity=".88" text-anchor="middle">S227</text>
<rect x="986.4" y="82.0" width="16.3" height="6.2" rx="1.1" fill="#f9a22e"/>
<text x="994.5" y="86.8" font-size="4.9" fill="#fff" fill-opacity=".88" text-anchor="middle">S227</text>
<rect x="626.7" y="232.4" width="13.7" height="6.9" rx="1.1" fill="#3f9f45"/>
<text x="633.5" y="237.6" font-size="4.9" fill="#fff" fill-opacity=".88" text-anchor="middle">S29</text>
<rect x="680.6" y="186.6" width="14.1" height="6.2" rx="1.1" fill="#3f9f45"/>
<text x="687.7" y="191.4" font-size="4.9" fill="#fff" fill-opacity=".88" text-anchor="middle">G20</text>
<rect x="683.0" y="164.4" width="15.4" height="6.6" rx="1.1" fill="#f9a22e"/>
<text x="690.7" y="169.4" font-size="4.9" fill="#fff" fill-opacity=".88" text-anchor="middle">S236</text>
<rect x="770.0" y="183.7" width="14.6" height="6.9" rx="1.1" fill="#3f9f45"/>
<text x="777.3" y="188.9" font-size="4.9" fill="#fff" fill-opacity=".88" text-anchor="middle">G20</text>
<rect x="859.0" y="183.7" width="14.0" height="6.9" rx="1.1" fill="#3f9f45"/>
<text x="866.0" y="188.9" font-size="4.9" fill="#fff" fill-opacity=".88" text-anchor="middle">G20</text>
<rect x="856.7" y="159.4" width="16.3" height="6.9" rx="1.1" fill="#e7585c"/>
<text x="864.9" y="164.6" font-size="4.9" fill="#fff" fill-opacity=".88" text-anchor="middle">G233</text>
<rect x="957.7" y="159.7" width="16.9" height="7.2" rx="1.1" fill="#e7585c"/>
<text x="966.2" y="165.1" font-size="4.9" fill="#fff" fill-opacity=".88" text-anchor="middle">G233</text>
<rect x="944.2" y="202.8" width="15.9" height="7.2" rx="1.1" fill="#f9a22e"/>
<text x="952.2" y="208.2" font-size="4.9" fill="#fff" fill-opacity=".88" text-anchor="middle">S233</text>
<rect x="974.6" y="202.8" width="15.9" height="7.2" rx="1.1" fill="#f9a22e"/>
<text x="982.5" y="208.2" font-size="4.9" fill="#fff" fill-opacity=".88" text-anchor="middle">S102</text>
<rect x="1034.5" y="210.3" width="14.0" height="6.6" rx="1.1" fill="#3f9f45"/>
<text x="1041.5" y="215.4" font-size="4.9" fill="#fff" fill-opacity=".88" text-anchor="middle">G20</text>
<rect x="1048.5" y="211.8" width="14.5" height="6.9" rx="1.1" fill="#3f9f45"/>
<text x="1055.8" y="217.0" font-size="4.9" fill="#fff" fill-opacity=".88" text-anchor="middle">G20</text>
<rect x="1022.3" y="213.7" width="16.5" height="7.8" rx="1.1" fill="#e7585c"/>
<text x="1030.5" y="219.3" font-size="4.9" fill="#fff" fill-opacity=".88" text-anchor="middle">G308</text>
<rect x="593.6" y="258.8" width="14.8" height="6.6" rx="1.1" fill="#f9a22e"/>
<text x="601.0" y="263.9" font-size="4.9" fill="#fff" fill-opacity=".88" text-anchor="middle">S102</text>
<rect x="496.2" y="294.8" width="16.6" height="7.1" rx="1.1" fill="#e7585c"/>
<text x="504.5" y="300.1" font-size="4.9" fill="#fff" fill-opacity=".88" text-anchor="middle">G309</text>
<rect x="551.2" y="289.7" width="15.0" height="6.9" rx="1.1" fill="#f9a22e"/>
<text x="558.7" y="294.9" font-size="4.9" fill="#fff" fill-opacity=".88" text-anchor="middle">S235</text>
<rect x="588.7" y="311.8" width="15.0" height="7.2" rx="1.1" fill="#f9a22e"/>
<text x="596.2" y="317.1" font-size="4.9" fill="#fff" fill-opacity=".88" text-anchor="middle">S235</text>
<rect x="639.8" y="281.0" width="16.5" height="6.8" rx="1.1" fill="#e7585c"/>
<text x="648.0" y="286.1" font-size="4.9" fill="#fff" fill-opacity=".88" text-anchor="middle">G205</text>
<rect x="548.4" y="340.3" width="15.9" height="7.1" rx="1.1" fill="#f9a22e"/>
<text x="556.3" y="345.6" font-size="4.9" fill="#fff" fill-opacity=".88" text-anchor="middle">S102</text>
<rect x="573.9" y="343.6" width="15.7" height="7.0" rx="1.1" fill="#f9a22e"/>
<text x="581.8" y="348.9" font-size="4.9" fill="#fff" fill-opacity=".88" text-anchor="middle">S102</text>
<rect x="781.4" y="306.2" width="15.6" height="6.5" rx="1.1" fill="#f9a22e"/>
<text x="789.2" y="311.2" font-size="4.9" fill="#fff" fill-opacity=".88" text-anchor="middle">S235</text>
<rect x="697.0" y="324.7" width="15.8" height="6.8" rx="1.1" fill="#f9a22e"/>
<text x="704.9" y="329.9" font-size="4.9" fill="#fff" fill-opacity=".88" text-anchor="middle">S294</text>
<rect x="691.0" y="337.0" width="15.5" height="7.0" rx="1.1" fill="#f9a22e"/>
<text x="698.8" y="342.2" font-size="4.9" fill="#fff" fill-opacity=".88" text-anchor="middle">S232</text>
<rect x="904.7" y="257.5" width="15.6" height="6.9" rx="1.1" fill="#f9a22e"/>
<text x="912.5" y="262.7" font-size="4.9" fill="#fff" fill-opacity=".88" text-anchor="middle">S102</text>
<rect x="929.0" y="257.0" width="16.0" height="7.0" rx="1.1" fill="#f9a22e"/>
<text x="937.0" y="262.2" font-size="4.9" fill="#fff" fill-opacity=".88" text-anchor="middle">S102</text>
<rect x="936.2" y="323.0" width="15.5" height="7.0" rx="1.1" fill="#f9a22e"/>
<text x="944.0" y="328.2" font-size="4.9" fill="#fff" fill-opacity=".88" text-anchor="middle">S231</text>
<rect x="623.9" y="361.2" width="15.9" height="6.6" rx="1.1" fill="#e7585c"/>
<text x="631.8" y="366.2" font-size="4.9" fill="#fff" fill-opacity=".88" text-anchor="middle">G205</text>
<rect x="579.5" y="386.9" width="13.1" height="6.6" rx="1.1" fill="#3f9f45"/>
<text x="586.0" y="391.9" font-size="4.9" fill="#fff" fill-opacity=".88" text-anchor="middle">S29</text>
<rect x="673.5" y="370.6" width="15.4" height="6.4" rx="1.1" fill="#f9a22e"/>
<text x="681.2" y="375.6" font-size="4.9" fill="#fff" fill-opacity=".88" text-anchor="middle">S102</text>
<rect x="486.0" y="425.3" width="20.0" height="6.5" rx="1.1" fill="#f9a22e"/>
<text x="496.0" y="430.3" font-size="4.9" fill="#fff" fill-opacity=".88" text-anchor="middle">G309</text>
<rect x="600.0" y="443.0" width="16.4" height="7.5" rx="1.1" fill="#e7585c"/>
<text x="608.2" y="448.5" font-size="4.9" fill="#fff" fill-opacity=".88" text-anchor="middle">G205</text>
<rect x="838.0" y="360.0" width="15.0" height="7.6" rx="1.1" fill="#f9a22e"/>
<text x="845.5" y="365.6" font-size="4.9" fill="#fff" fill-opacity=".88" text-anchor="middle">S102</text>
<rect x="983.0" y="440.0" width="16.0" height="6.8" rx="1.1" fill="#f9a22e"/>
<text x="991.0" y="445.1" font-size="4.9" fill="#fff" fill-opacity=".88" text-anchor="middle">S325</text>
<rect x="601.0" y="496.8" width="15.9" height="6.8" rx="1.1" fill="#f9a22e"/>
<text x="609.0" y="502.0" font-size="4.9" fill="#fff" fill-opacity=".88" text-anchor="middle">S232</text>
<rect x="486.0" y="457.3" width="12.3" height="7.1" rx="1.1" fill="#f9a22e"/>
<text x="492.1" y="462.6" font-size="4.9" fill="#fff" fill-opacity=".88" text-anchor="middle">S50</text>
<rect x="758.0" y="457.3" width="15.7" height="7.1" rx="1.1" fill="#f9a22e"/>
<text x="765.9" y="462.6" font-size="4.9" fill="#fff" fill-opacity=".88" text-anchor="middle">S509</text>
<rect x="842.8" y="477.3" width="15.2" height="7.1" rx="1.1" fill="#f9a22e"/>
<text x="850.4" y="482.6" font-size="4.9" fill="#fff" fill-opacity=".88" text-anchor="middle">S509</text>
<rect x="1022" y="213.4" width="17" height="8.4" rx="1.2" fill="none" stroke="#fff" stroke-width=".6" opacity=".8"/>
<rect x="1066.5" y="106.6" width="10" height="5.6" fill="#fff"/><text x="1067.6" y="111.2" font-size="4.4" fill="#888">309</text>
<rect x="1070.5" y="132" width="6" height="5.4" fill="#fff"/><text x="1071.4" y="136.5" font-size="4.4" fill="#888">X0</text>
<rect x="1065" y="200.8" width="11" height="5.4" fill="#fff"/><text x="1066" y="205.3" font-size="4.2" fill="#888">X062</text>
<text x="529.7" y="72.2" font-size="6.1" fill="#93a3a1" font-weight="normal" text-anchor="start" stroke="#f5f3f0" stroke-width="1.2" paint-order="stroke" stroke-linejoin="round">西丘村</text>
<text x="515.3" y="79.7" font-size="6.1" fill="#93a3a1" font-weight="normal" text-anchor="start" stroke="#f5f3f0" stroke-width="1.2" paint-order="stroke" stroke-linejoin="round">纸房</text>
<text x="533.0" y="93.4" font-size="6.1" fill="#93a3a1" font-weight="normal" text-anchor="start" stroke="#f5f3f0" stroke-width="1.2" paint-order="stroke" stroke-linejoin="round">小管</text>
<text x="583.6" y="70.7" font-size="6.1" fill="#93a3a1" font-weight="normal" text-anchor="start" stroke="#f5f3f0" stroke-width="1.2" paint-order="stroke" stroke-linejoin="round">后柏林</text>
<text x="529.3" y="143.0" font-size="6.1" fill="#93a3a1" font-weight="normal" text-anchor="start" stroke="#f5f3f0" stroke-width="1.2" paint-order="stroke" stroke-linejoin="round">永池村</text>
<text x="581.2" y="140.2" font-size="6.1" fill="#93a3a1" font-weight="normal" text-anchor="start" stroke="#f5f3f0" stroke-width="1.2" paint-order="stroke" stroke-linejoin="round">三黎</text>
<text x="651.4" y="104.5" font-size="6.1" fill="#93a3a1" font-weight="normal" text-anchor="start" stroke="#f5f3f0" stroke-width="1.2" paint-order="stroke" stroke-linejoin="round">永富村</text>
<text x="489.5" y="121.9" font-size="6.1" fill="#93a3a1" font-weight="normal" text-anchor="start" stroke="#f5f3f0" stroke-width="1.2" paint-order="stroke" stroke-linejoin="round">家村</text>
<text x="823.3" y="63.4" font-size="6.1" fill="#93a3a1" font-weight="normal" text-anchor="start" stroke="#f5f3f0" stroke-width="1.2" paint-order="stroke" stroke-linejoin="round">邢刘村</text>
<text x="836.0" y="87.8" font-size="6.1" fill="#93a3a1" font-weight="normal" text-anchor="start" stroke="#f5f3f0" stroke-width="1.2" paint-order="stroke" stroke-linejoin="round">东韵</text>
<text x="829.5" y="96.6" font-size="6.1" fill="#93a3a1" font-weight="normal" text-anchor="start" stroke="#f5f3f0" stroke-width="1.2" paint-order="stroke" stroke-linejoin="round">南辛村</text>
<text x="841.7" y="150.2" font-size="6.1" fill="#93a3a1" font-weight="normal" text-anchor="start" stroke="#f5f3f0" stroke-width="1.2" paint-order="stroke" stroke-linejoin="round">红花园村</text>
<text x="884.0" y="61.9" font-size="6.1" fill="#93a3a1" font-weight="normal" text-anchor="start" stroke="#f5f3f0" stroke-width="1.2" paint-order="stroke" stroke-linejoin="round">某新村</text>
<text x="978.4" y="61.9" font-size="6.1" fill="#93a3a1" font-weight="normal" text-anchor="start" stroke="#f5f3f0" stroke-width="1.2" paint-order="stroke" stroke-linejoin="round">李家西村</text>
<text x="1065.4" y="92.8" font-size="6.1" fill="#93a3a1" font-weight="normal" text-anchor="start" stroke="#f5f3f0" stroke-width="1.2" paint-order="stroke" stroke-linejoin="round">刘家</text>
<text x="1044.4" y="144.7" font-size="6.1" fill="#93a3a1" font-weight="normal" text-anchor="start" stroke="#f5f3f0" stroke-width="1.2" paint-order="stroke" stroke-linejoin="round">荣家庄村</text>
<text x="931.0" y="153.7" font-size="6.1" fill="#93a3a1" font-weight="normal" text-anchor="start" stroke="#f5f3f0" stroke-width="1.2" paint-order="stroke" stroke-linejoin="round">高雷村</text>
<text x="513.4" y="204.1" font-size="6.1" fill="#93a3a1" font-weight="normal" text-anchor="start" stroke="#f5f3f0" stroke-width="1.2" paint-order="stroke" stroke-linejoin="round">迎仙村</text>
<text x="1038.8" y="169.4" font-size="6.1" fill="#93a3a1" font-weight="normal" text-anchor="start" stroke="#f5f3f0" stroke-width="1.2" paint-order="stroke" stroke-linejoin="round">崔家庄村</text>
<text x="988.2" y="293.4" font-size="6.1" fill="#93a3a1" font-weight="normal" text-anchor="start" stroke="#f5f3f0" stroke-width="1.2" paint-order="stroke" stroke-linejoin="round">王家终村</text>
<text x="1042.0" y="314.4" font-size="6.1" fill="#93a3a1" font-weight="normal" text-anchor="start" stroke="#f5f3f0" stroke-width="1.2" paint-order="stroke" stroke-linejoin="round">小庄子</text>
<text x="952.7" y="334.6" font-size="6.1" fill="#93a3a1" font-weight="normal" text-anchor="start" stroke="#f5f3f0" stroke-width="1.2" paint-order="stroke" stroke-linejoin="round">陈娄村</text>
<text x="977.4" y="351.2" font-size="6.1" fill="#93a3a1" font-weight="normal" text-anchor="start" stroke="#f5f3f0" stroke-width="1.2" paint-order="stroke" stroke-linejoin="round">韩辛村</text>
<text x="1061.3" y="348.6" font-size="6.1" fill="#93a3a1" font-weight="normal" text-anchor="start" stroke="#f5f3f0" stroke-width="1.2" paint-order="stroke" stroke-linejoin="round">井峪村</text>
<text x="1062.6" y="288.2" font-size="6.1" fill="#93a3a1" font-weight="normal" text-anchor="start" stroke="#f5f3f0" stroke-width="1.2" paint-order="stroke" stroke-linejoin="round">辛南辛</text>
<text x="801.4" y="386.2" font-size="6.1" fill="#93a3a1" font-weight="normal" text-anchor="start" stroke="#f5f3f0" stroke-width="1.2" paint-order="stroke" stroke-linejoin="round">辛庄村</text>
<text x="829.0" y="405.0" font-size="6.1" fill="#93a3a1" font-weight="normal" text-anchor="start" stroke="#f5f3f0" stroke-width="1.2" paint-order="stroke" stroke-linejoin="round">陈岭村</text>
<text x="866.4" y="425.2" font-size="6.1" fill="#93a3a1" font-weight="normal" text-anchor="start" stroke="#f5f3f0" stroke-width="1.2" paint-order="stroke" stroke-linejoin="round">南木西村</text>
<text x="832.7" y="452.8" font-size="6.1" fill="#93a3a1" font-weight="normal" text-anchor="start" stroke="#f5f3f0" stroke-width="1.2" paint-order="stroke" stroke-linejoin="round">西井村</text>
<text x="912.0" y="367.9" font-size="6.1" fill="#93a3a1" font-weight="normal" text-anchor="start" stroke="#f5f3f0" stroke-width="1.2" paint-order="stroke" stroke-linejoin="round">南又营村</text>
<text x="966.0" y="373.2" font-size="6.1" fill="#93a3a1" font-weight="normal" text-anchor="start" stroke="#f5f3f0" stroke-width="1.2" paint-order="stroke" stroke-linejoin="round">南西坡村</text>
<text x="1044.4" y="378.2" font-size="6.1" fill="#93a3a1" font-weight="normal" text-anchor="start" stroke="#f5f3f0" stroke-width="1.2" paint-order="stroke" stroke-linejoin="round">就河村</text>
<text x="954.0" y="397.9" font-size="6.1" fill="#93a3a1" font-weight="normal" text-anchor="start" stroke="#f5f3f0" stroke-width="1.2" paint-order="stroke" stroke-linejoin="round">河庄村</text>
<text x="916.0" y="425.6" font-size="6.1" fill="#93a3a1" font-weight="normal" text-anchor="start" stroke="#f5f3f0" stroke-width="1.2" paint-order="stroke" stroke-linejoin="round">西茂峪村</text>
<text x="995.7" y="427.5" font-size="6.1" fill="#93a3a1" font-weight="normal" text-anchor="start" stroke="#f5f3f0" stroke-width="1.2" paint-order="stroke" stroke-linejoin="round">刘家庄村</text>
<text x="1042.5" y="439.2" font-size="6.1" fill="#93a3a1" font-weight="normal" text-anchor="start" stroke="#f5f3f0" stroke-width="1.2" paint-order="stroke" stroke-linejoin="round">辛店子村</text>
<text x="968.0" y="455.7" font-size="6.1" fill="#93a3a1" font-weight="normal" text-anchor="start" stroke="#f5f3f0" stroke-width="1.2" paint-order="stroke" stroke-linejoin="round">牛角村</text>
<text x="878.0" y="467.5" font-size="6.1" fill="#93a3a1" font-weight="normal" text-anchor="start" stroke="#f5f3f0" stroke-width="1.2" paint-order="stroke" stroke-linejoin="round">西坡</text>
<text x="768.0" y="489.7" font-size="6.1" fill="#93a3a1" font-weight="normal" text-anchor="start" stroke="#f5f3f0" stroke-width="1.2" paint-order="stroke" stroke-linejoin="round">蝌坡村</text>
<text x="875.0" y="491.0" font-size="6.1" fill="#93a3a1" font-weight="normal" text-anchor="start" stroke="#f5f3f0" stroke-width="1.2" paint-order="stroke" stroke-linejoin="round">马岭杭村</text>
<text x="867.4" y="504.2" font-size="6.1" fill="#93a3a1" font-weight="normal" text-anchor="start" stroke="#f5f3f0" stroke-width="1.2" paint-order="stroke" stroke-linejoin="round">上庄乡</text>
<text x="856.7" y="516.2" font-size="6.1" fill="#93a3a1" font-weight="normal" text-anchor="start" stroke="#f5f3f0" stroke-width="1.2" paint-order="stroke" stroke-linejoin="round">长秋村</text>
<text x="775.0" y="527.7" font-size="6.1" fill="#93a3a1" font-weight="normal" text-anchor="start" stroke="#f5f3f0" stroke-width="1.2" paint-order="stroke" stroke-linejoin="round">三陵寨</text>
<text x="1040.7" y="475.8" font-size="6.1" fill="#93a3a1" font-weight="normal" text-anchor="start" stroke="#f5f3f0" stroke-width="1.2" paint-order="stroke" stroke-linejoin="round">小黑山</text>
<text x="1023.0" y="505.5" font-size="6.1" fill="#93a3a1" font-weight="normal" text-anchor="start" stroke="#f5f3f0" stroke-width="1.2" paint-order="stroke" stroke-linejoin="round">董王村</text>
<text x="921.0" y="511.9" font-size="6.1" fill="#93a3a1" font-weight="normal" text-anchor="start" stroke="#f5f3f0" stroke-width="1.2" paint-order="stroke" stroke-linejoin="round">水泉洞</text>
<text x="956.0" y="517.5" font-size="6.1" fill="#93a3a1" font-weight="normal" text-anchor="start" stroke="#f5f3f0" stroke-width="1.2" paint-order="stroke" stroke-linejoin="round">杨子</text>
<text x="997.0" y="526.7" font-size="6.1" fill="#93a3a1" font-weight="normal" text-anchor="start" stroke="#f5f3f0" stroke-width="1.2" paint-order="stroke" stroke-linejoin="round">平安村</text>
<text x="518.7" y="499.6" font-size="6.1" fill="#93a3a1" font-weight="normal" text-anchor="start" stroke="#f5f3f0" stroke-width="1.2" paint-order="stroke" stroke-linejoin="round">小历村</text>
<text x="593.0" y="58.8" font-size="6.1" fill="#93a3a1" font-weight="normal" text-anchor="start" stroke="#f5f3f0" stroke-width="1.2" paint-order="stroke" stroke-linejoin="round">后柏林村</text>
<text x="765.0" y="69.2" font-size="8" fill="#8e8e8e" font-weight="normal" text-anchor="start" stroke="#f5f3f0" stroke-width="1.2" paint-order="stroke" stroke-linejoin="round">桓台县</text>
<text x="542.4" y="260.9" font-size="8" fill="#8e8e8e" font-weight="normal" text-anchor="start" stroke="#f5f3f0" stroke-width="1.2" paint-order="stroke" stroke-linejoin="round">周村区</text>
<text x="971.8" y="231.5" font-size="7.8" fill="#8e8e8e" font-weight="normal" text-anchor="start" stroke="#f5f3f0" stroke-width="1.2" paint-order="stroke" stroke-linejoin="round">临淄区</text>
<text x="638.0" y="453.4" font-size="7.8" fill="#8e8e8e" font-weight="normal" text-anchor="start" stroke="#f5f3f0" stroke-width="1.2" paint-order="stroke" stroke-linejoin="round">淄川区</text>
<text x="854.8" y="210.4" font-size="6.6" fill="#8e8e8e" font-weight="normal" text-anchor="start" stroke="#f5f3f0" stroke-width="1.2" paint-order="stroke" stroke-linejoin="round">中埠镇</text>
<text x="1015.2" y="192.7" font-size="6.6" fill="#8e8e8e" font-weight="normal" text-anchor="start" stroke="#f5f3f0" stroke-width="1.2" paint-order="stroke" stroke-linejoin="round">齐都镇</text>
<text x="864.0" y="265.7" font-size="6.2" fill="#8e8e8e" font-weight="normal" text-anchor="start" stroke="#f5f3f0" stroke-width="1.2" paint-order="stroke" stroke-linejoin="round">金岭回族镇</text>
<text x="981.0" y="326.8" font-size="6.6" fill="#8e8e8e" font-weight="normal" text-anchor="start" stroke="#f5f3f0" stroke-width="1.2" paint-order="stroke" stroke-linejoin="round">邵庄镇</text>
<text x="669.4" y="392.0" font-size="6.4" fill="#8e8e8e" font-weight="normal" text-anchor="start" stroke="#f5f3f0" stroke-width="1.2" paint-order="stroke" stroke-linejoin="round">双沟镇</text>
<text x="739.6" y="403.4" font-size="6.6" fill="#8e8e8e" font-weight="normal" text-anchor="start" stroke="#f5f3f0" stroke-width="1.2" paint-order="stroke" stroke-linejoin="round">罗村镇</text>
<text x="899.4" y="459.3" font-size="6.4" fill="#8e8e8e" font-weight="normal" text-anchor="start" stroke="#f5f3f0" stroke-width="1.2" paint-order="stroke" stroke-linejoin="round">庙子镇</text>
<text x="721.0" y="248.8" font-size="9.8" fill="#4d4d4d" font-weight="normal" text-anchor="start" stroke="#f5f3f0" stroke-width="2" paint-order="stroke" stroke-linejoin="round">淄博市</text>
<text x="633.8" y="76.6" font-size="6.6" fill="#2f2f2f" font-weight="500" text-anchor="start" stroke="#fff" stroke-width="1.2" paint-order="stroke" stroke-linejoin="round">桓台互通立交</text>
<text x="540.6" y="194.9" font-size="6.6" fill="#2f2f2f" font-weight="500" text-anchor="start" stroke="#fff" stroke-width="1.2" paint-order="stroke" stroke-linejoin="round">周村立交</text>
<text x="620.7" y="188.4" font-size="6.6" fill="#2f2f2f" font-weight="500" text-anchor="start" stroke="#fff" stroke-width="1.2" paint-order="stroke" stroke-linejoin="round">淄博西枢纽立交</text>
<text x="612.0" y="202.8" font-size="6.6" fill="#2f2f2f" font-weight="500" text-anchor="start" stroke="#fff" stroke-width="1.2" paint-order="stroke" stroke-linejoin="round">淄博西立交</text>
<text x="744.0" y="191.7" font-size="6.6" fill="#2f2f2f" font-weight="500" text-anchor="start" stroke="#fff" stroke-width="1.2" paint-order="stroke" stroke-linejoin="round">淄博立交</text>
<text x="959.6" y="196.4" font-size="6.6" fill="#2f2f2f" font-weight="500" text-anchor="start" stroke="#fff" stroke-width="1.2" paint-order="stroke" stroke-linejoin="round">临淄立交</text>
<text x="594.0" y="344.4" font-size="6.6" fill="#2f2f2f" font-weight="500" text-anchor="start" stroke="#fff" stroke-width="1.2" paint-order="stroke" stroke-linejoin="round">文昌湖立交</text>
<text x="894.0" y="160.9" font-size="7.6" fill="#2f2f2f" font-weight="500" text-anchor="middle" stroke="#fff" stroke-width="1.3" paint-order="stroke" stroke-linejoin="round" transform="rotate(8 894.0 158.2)">张星路</text>
<text x="905.0" y="235.1" font-size="7.6" fill="#2f2f2f" font-weight="500" text-anchor="middle" stroke="#fff" stroke-width="1.3" paint-order="stroke" stroke-linejoin="round" transform="rotate(-16 905.0 232.4)">临淄大道</text>
<text x="967.2" y="297.5" font-size="6.9" fill="#2f2f2f" font-weight="500" text-anchor="middle" stroke="#fff" stroke-width="1.3" paint-order="stroke" stroke-linejoin="round" transform="rotate(32 967.2 295.0)">淄</text>
<text x="962.6" y="304.7" font-size="6.9" fill="#2f2f2f" font-weight="500" text-anchor="middle" stroke="#fff" stroke-width="1.3" paint-order="stroke" stroke-linejoin="round" transform="rotate(32 962.6 302.2)">河</text>
<text x="958.0" y="312.1" font-size="6.9" fill="#2f2f2f" font-weight="500" text-anchor="middle" stroke="#fff" stroke-width="1.3" paint-order="stroke" stroke-linejoin="round" transform="rotate(32 958.0 309.6)">大</text>
<text x="953.4" y="319.7" font-size="6.9" fill="#2f2f2f" font-weight="500" text-anchor="middle" stroke="#fff" stroke-width="1.3" paint-order="stroke" stroke-linejoin="round" transform="rotate(32 953.4 317.2)">道</text>
<text x="559.1" y="447.5" font-size="6.9" fill="#2f2f2f" font-weight="500" text-anchor="middle" stroke="#fff" stroke-width="1.3" paint-order="stroke" stroke-linejoin="round" transform="rotate(12 559.1 445.0)">滨</text>
<text x="556.9" y="455.9" font-size="6.9" fill="#2f2f2f" font-weight="500" text-anchor="middle" stroke="#fff" stroke-width="1.3" paint-order="stroke" stroke-linejoin="round" transform="rotate(12 556.9 453.4)">莱</text>
<text x="555.6" y="464.0" font-size="6.9" fill="#2f2f2f" font-weight="500" text-anchor="middle" stroke="#fff" stroke-width="1.3" paint-order="stroke" stroke-linejoin="round" transform="rotate(12 555.6 461.5)">高</text>
<text x="554.6" y="472.0" font-size="6.9" fill="#2f2f2f" font-weight="500" text-anchor="middle" stroke="#fff" stroke-width="1.3" paint-order="stroke" stroke-linejoin="round" transform="rotate(12 554.6 469.5)">速</text>
<text x="608.6" y="460.7" font-size="6.9" fill="#2f2f2f" font-weight="500" text-anchor="middle" stroke="#fff" stroke-width="1.3" paint-order="stroke" stroke-linejoin="round" transform="rotate(25 608.6 458.2)">张</text>
<text x="605.4" y="467.9" font-size="6.9" fill="#2f2f2f" font-weight="500" text-anchor="middle" stroke="#fff" stroke-width="1.3" paint-order="stroke" stroke-linejoin="round" transform="rotate(25 605.4 465.4)">博</text>
<text x="602.0" y="475.3" font-size="6.9" fill="#2f2f2f" font-weight="500" text-anchor="middle" stroke="#fff" stroke-width="1.3" paint-order="stroke" stroke-linejoin="round" transform="rotate(25 602.0 472.8)">附</text>
<text x="598.8" y="483.0" font-size="6.9" fill="#2f2f2f" font-weight="500" text-anchor="middle" stroke="#fff" stroke-width="1.3" paint-order="stroke" stroke-linejoin="round" transform="rotate(25 598.8 480.5)">线</text>
<text x="900.2" y="431.9" font-size="6.8" fill="#2f2f2f" font-weight="bold" text-anchor="middle" stroke="#fff" stroke-width="1.8" paint-order="stroke" stroke-linejoin="round">淄</text>
<text x="900.2" y="439.0" font-size="6.8" fill="#2f2f2f" font-weight="bold" text-anchor="middle" stroke="#fff" stroke-width="1.8" paint-order="stroke" stroke-linejoin="round">江</text>
<text x="900.2" y="446.1" font-size="6.8" fill="#2f2f2f" font-weight="bold" text-anchor="middle" stroke="#fff" stroke-width="1.8" paint-order="stroke" stroke-linejoin="round">路</text>
<path d="M490.6 110.4 L492.6 113.1 L494.6 110.4Z" fill="#39b3d7"/>
<circle cx="492.6" cy="106.2" r="4.9" fill="#39b3d7"/>
<path d="M490.3 108.7 v-3.3 h1.1 v-1.4 h2.4 v1.4 h1.1 v3.3z M491.9 108.7 v-1.6 h1.4 v1.6" fill="#fff" fill-opacity=".93"/>
<path d="M518.0 168.6 L520.0 171.3 L522.0 168.6Z" fill="#39b3d7"/>
<circle cx="520.0" cy="164.4" r="4.9" fill="#39b3d7"/>
<path d="M517.7 166.9 v-3.3 h1.1 v-1.4 h2.4 v1.4 h1.1 v3.3z M519.3 166.9 v-1.6 h1.4 v1.6" fill="#fff" fill-opacity=".93"/>
<path d="M937.0 117.2 L939.0 119.9 L941.0 117.2Z" fill="#39b3d7"/>
<circle cx="939.0" cy="113.0" r="4.9" fill="#39b3d7"/>
<path d="M936.7 115.5 v-3.3 h1.1 v-1.4 h2.4 v1.4 h1.1 v3.3z M938.3 115.5 v-1.6 h1.4 v1.6" fill="#fff" fill-opacity=".93"/>
<path d="M719.0 163.0 L721.0 165.7 L723.0 163.0Z" fill="#39b3d7"/>
<circle cx="721.0" cy="158.8" r="4.9" fill="#39b3d7"/>
<path d="M718.7 161.3 v-3.3 h1.1 v-1.4 h2.4 v1.4 h1.1 v3.3z M720.3 161.3 v-1.6 h1.4 v1.6" fill="#fff" fill-opacity=".93"/>
<path d="M758.8 161.7 L760.8 164.4 L762.8 161.7Z" fill="#39b3d7"/>
<circle cx="760.8" cy="157.5" r="4.9" fill="#39b3d7"/>
<path d="M757.8 156.9 L760.8 155.3 L763.8 156.9 L760.8 158.5Z M759.2 158.4 q1.6 1.6 3.2 0 v1.2 q-1.6 1.4 -3.2 0z" fill="#fff" fill-opacity=".93"/>
<path d="M812.0 196.2 L814.0 198.9 L816.0 196.2Z" fill="#39b3d7"/>
<circle cx="814.0" cy="192.0" r="4.9" fill="#39b3d7"/>
<path d="M811.7 194.5 v-3.3 h1.1 v-1.4 h2.4 v1.4 h1.1 v3.3z M813.3 194.5 v-1.6 h1.4 v1.6" fill="#fff" fill-opacity=".93"/>
<path d="M601.3 219.8 L603.3 222.5 L605.3 219.8Z" fill="#39b3d7"/>
<circle cx="603.3" cy="215.6" r="4.9" fill="#39b3d7"/>
<path d="M600.3 215.0 L603.3 213.4 L606.3 215.0 L603.3 216.6Z M601.7 216.5 q1.6 1.6 3.2 0 v1.2 q-1.6 1.4 -3.2 0z" fill="#fff" fill-opacity=".93"/>
<path d="M596.6 233.2 L598.6 235.9 L600.6 233.2Z" fill="#39b3d7"/>
<circle cx="598.6" cy="229.0" r="4.9" fill="#39b3d7"/>
<path d="M595.6 228.4 L598.6 226.8 L601.6 228.4 L598.6 230.0Z M597.0 229.9 q1.6 1.6 3.2 0 v1.2 q-1.6 1.4 -3.2 0z" fill="#fff" fill-opacity=".93"/>
<path d="M681.0 252.5 L683.0 255.2 L685.0 252.5Z" fill="#39b3d7"/>
<circle cx="683.0" cy="248.3" r="4.9" fill="#39b3d7"/>
<path d="M680.0 247.7 L683.0 246.1 L686.0 247.7 L683.0 249.3Z M681.4 249.2 q1.6 1.6 3.2 0 v1.2 q-1.6 1.4 -3.2 0z" fill="#fff" fill-opacity=".93"/>
<path d="M590.6 281.7 L592.6 284.4 L594.6 281.7Z" fill="#39b3d7"/>
<circle cx="592.6" cy="277.5" r="4.9" fill="#39b3d7"/>
<path d="M590.3 280.0 v-3.3 h1.1 v-1.4 h2.4 v1.4 h1.1 v3.3z M591.9 280.0 v-1.6 h1.4 v1.6" fill="#fff" fill-opacity=".93"/>
<path d="M637.8 299.2 L639.8 301.9 L641.8 299.2Z" fill="#39b3d7"/>
<circle cx="639.8" cy="295.0" r="4.9" fill="#39b3d7"/>
<path d="M637.5 297.5 v-3.3 h1.1 v-1.4 h2.4 v1.4 h1.1 v3.3z M639.1 297.5 v-1.6 h1.4 v1.6" fill="#fff" fill-opacity=".93"/>
<path d="M839.3 332.9 L841.3 335.6 L843.3 332.9Z" fill="#39b3d7"/>
<circle cx="841.3" cy="328.7" r="4.9" fill="#39b3d7"/>
<path d="M839.0 331.2 v-3.3 h1.1 v-1.4 h2.4 v1.4 h1.1 v3.3z M840.6 331.2 v-1.6 h1.4 v1.6" fill="#fff" fill-opacity=".93"/>
<path d="M754.5 349.7 L756.5 352.4 L758.5 349.7Z" fill="#39b3d7"/>
<circle cx="756.5" cy="345.5" r="4.9" fill="#39b3d7"/>
<path d="M754.2 348.0 v-3.3 h1.1 v-1.4 h2.4 v1.4 h1.1 v3.3z M755.8 348.0 v-1.6 h1.4 v1.6" fill="#fff" fill-opacity=".93"/>
<path d="M577.5 433.2 L579.5 435.9 L581.5 433.2Z" fill="#39b3d7"/>
<circle cx="579.5" cy="429.0" r="4.9" fill="#39b3d7"/>
<path d="M576.5 428.4 L579.5 426.8 L582.5 428.4 L579.5 430.0Z M577.9 429.9 q1.6 1.6 3.2 0 v1.2 q-1.6 1.4 -3.2 0z" fill="#fff" fill-opacity=".93"/>
<path d="M676.2 409.2 L678.2 411.9 L680.2 409.2Z" fill="#39b3d7"/>
<circle cx="678.2" cy="405.0" r="4.9" fill="#39b3d7"/>
<path d="M675.9 407.5 v-3.3 h1.1 v-1.4 h2.4 v1.4 h1.1 v3.3z M677.5 407.5 v-1.6 h1.4 v1.6" fill="#fff" fill-opacity=".93"/>
<path d="M595.4 528.7 L597.4 531.4 L599.4 528.7Z" fill="#39b3d7"/>
<circle cx="597.4" cy="524.5" r="4.9" fill="#39b3d7"/>
<path d="M595.1 527.0 v-3.3 h1.1 v-1.4 h2.4 v1.4 h1.1 v3.3z M596.7 527.0 v-1.6 h1.4 v1.6" fill="#fff" fill-opacity=".93"/>
<path d="M1036.8 247.8 L1038.8 250.5 L1040.8 247.8Z" fill="#39b3d7"/>
<circle cx="1038.8" cy="243.6" r="4.9" fill="#39b3d7"/>
<path d="M1036.5 246.1 v-3.3 h1.1 v-1.4 h2.4 v1.4 h1.1 v3.3z M1038.1 246.1 v-1.6 h1.4 v1.6" fill="#fff" fill-opacity=".93"/>
<path d="M800.7 84.9 L802.7 87.6 L804.7 84.9Z" fill="#5b82ea"/>
<circle cx="802.7" cy="80.7" r="4.9" fill="#5b82ea"/>
<circle cx="802.7" cy="80.7" r="2.7" fill="none" stroke="#fff" stroke-width=".9"/><path d="M801.6 81.9 v-2 q1.1 -1 2.2 0 v2z" fill="#fff"/>
<path d="M770.4 115.4 L772.4 118.1 L774.4 115.4Z" fill="#5b82ea"/>
<circle cx="772.4" cy="111.2" r="4.9" fill="#5b82ea"/>
<rect x="770.6" y="108.8" width="3.2" height="4.8" rx=".5" fill="#fff"/><rect x="771.3" y="109.5" width="1.8" height="1.4" fill="#5b82ea"/>
<path d="M705.8 146.7 L707.8 149.4 L709.8 146.7Z" fill="#5b82ea"/>
<circle cx="707.8" cy="142.5" r="4.9" fill="#5b82ea"/>
<circle cx="707.8" cy="142.5" r="2.7" fill="none" stroke="#fff" stroke-width=".9"/><path d="M706.7 143.7 v-2 q1.1 -1 2.2 0 v2z" fill="#fff"/>
<path d="M1011.3 134.7 L1013.3 137.4 L1015.3 134.7Z" fill="#5b82ea"/>
<circle cx="1013.3" cy="130.5" r="4.9" fill="#5b82ea"/>
<circle cx="1013.3" cy="130.5" r="2.7" fill="none" stroke="#fff" stroke-width=".9"/><path d="M1012.2 131.7 v-2 q1.1 -1 2.2 0 v2z" fill="#fff"/>
<path d="M735.4 277.1 L737.4 279.8 L739.4 277.1Z" fill="#5b82ea"/>
<circle cx="737.4" cy="272.9" r="4.9" fill="#5b82ea"/>
<circle cx="737.4" cy="272.9" r="2.7" fill="none" stroke="#fff" stroke-width=".9"/><path d="M736.3 274.1 v-2 q1.1 -1 2.2 0 v2z" fill="#fff"/>
<path d="M808.4 288.2 L810.4 290.9 L812.4 288.2Z" fill="#5b82ea"/>
<circle cx="810.4" cy="284.0" r="4.9" fill="#5b82ea"/>
<circle cx="810.4" cy="284.0" r="2.7" fill="none" stroke="#fff" stroke-width=".9"/><path d="M809.3 285.2 v-2 q1.1 -1 2.2 0 v2z" fill="#fff"/>
<path d="M602.6 363.9 L604.6 366.6 L606.6 363.9Z" fill="#5b82ea"/>
<circle cx="604.6" cy="359.7" r="4.9" fill="#5b82ea"/>
<text x="604.6" y="361.7" font-size="5.6" font-weight="bold" fill="#fff" text-anchor="middle">P</text>
<path d="M568.9 404.8 L570.9 407.5 L572.9 404.8Z" fill="#5b82ea"/>
<circle cx="570.9" cy="400.6" r="4.9" fill="#5b82ea"/>
<text x="570.9" y="402.6" font-size="5.6" font-weight="bold" fill="#fff" text-anchor="middle">P</text>
<path d="M751.7 99.9 L753.7 102.6 L755.7 99.9Z" fill="#4cb250"/>
<circle cx="753.7" cy="95.7" r="4.9" fill="#4cb250"/>
<path d="M751.5 98.2 v-3.2 l1.5 -1.5 l1.5 1.5 v-1 h1.4 v4.2z" fill="#fff" fill-opacity=".93"/>
<path d="M982.3 150.1 L984.3 152.8 L986.3 150.1Z" fill="#4cb250"/>
<circle cx="984.3" cy="145.9" r="4.9" fill="#4cb250"/>
<path d="M982.1 148.4 v-3.2 l1.5 -1.5 l1.5 1.5 v-1 h1.4 v4.2z" fill="#fff" fill-opacity=".93"/>
<path d="M671.0 214.2 L673.0 216.9 L675.0 214.2Z" fill="#4cb250"/>
<circle cx="673.0" cy="210.0" r="4.9" fill="#4cb250"/>
<path d="M670.8 212.5 v-3.2 l1.5 -1.5 l1.5 1.5 v-1 h1.4 v4.2z" fill="#fff" fill-opacity=".93"/>
<path d="M819.6 173.2 L821.6 175.9 L823.6 173.2Z" fill="#4cb250"/>
<circle cx="821.6" cy="169.0" r="4.9" fill="#4cb250"/>
<path d="M819.4 171.5 v-3.2 l1.5 -1.5 l1.5 1.5 v-1 h1.4 v4.2z" fill="#fff" fill-opacity=".93"/>
<path d="M788.7 232.2 L790.7 234.9 L792.7 232.2Z" fill="#4cb250"/>
<circle cx="790.7" cy="228.0" r="4.9" fill="#4cb250"/>
<path d="M788.5 230.5 v-3.2 l1.5 -1.5 l1.5 1.5 v-1 h1.4 v4.2z" fill="#fff" fill-opacity=".93"/>
<path d="M1023.7 272.4 L1025.7 275.1 L1027.7 272.4Z" fill="#4cb250"/>
<circle cx="1025.7" cy="268.2" r="4.9" fill="#4cb250"/>
<path d="M1023.5 270.7 v-3.2 l1.5 -1.5 l1.5 1.5 v-1 h1.4 v4.2z" fill="#fff" fill-opacity=".93"/>
<path d="M843.8 313.9 L845.8 316.6 L847.8 313.9Z" fill="#4cb250"/>
<circle cx="845.8" cy="309.7" r="4.9" fill="#4cb250"/>
<path d="M843.2 312.1 L845.4 306.9 L846.6 309.9 L847.3 308.9 L848.6 312.1Z" fill="#fff" fill-opacity=".93"/>
<path d="M884.6 312.6 L886.6 315.3 L888.6 312.6Z" fill="#4cb250"/>
<circle cx="886.6" cy="308.4" r="4.9" fill="#4cb250"/>
<path d="M884.0 310.8 L886.2 305.6 L887.4 308.6 L888.1 307.6 L889.4 310.8Z" fill="#fff" fill-opacity=".93"/>
<path d="M1054.6 334.5 L1056.6 337.2 L1058.6 334.5Z" fill="#4cb250"/>
<circle cx="1056.6" cy="330.3" r="4.9" fill="#4cb250"/>
<path d="M1054.0 332.7 L1056.2 327.5 L1057.4 330.5 L1058.1 329.5 L1059.4 332.7Z" fill="#fff" fill-opacity=".93"/>
<path d="M878.0 354.8 L880.0 357.5 L882.0 354.8Z" fill="#4cb250"/>
<circle cx="880.0" cy="350.6" r="4.9" fill="#4cb250"/>
<path d="M877.4 353.0 L879.6 347.8 L880.8 350.8 L881.5 349.8 L882.8 353.0Z" fill="#fff" fill-opacity=".93"/>
<path d="M511.1 359.5 L513.1 362.2 L515.1 359.5Z" fill="#4cb250"/>
<circle cx="513.1" cy="355.3" r="4.9" fill="#4cb250"/>
<path d="M510.5 357.7 L512.7 352.5 L513.9 355.5 L514.6 354.5 L515.9 357.7Z" fill="#fff" fill-opacity=".93"/>
<path d="M558.2 367.7 L560.2 370.4 L562.2 367.7Z" fill="#4cb250"/>
<circle cx="560.2" cy="363.5" r="4.9" fill="#4cb250"/>
<path d="M557.6 365.9 L559.8 360.7 L561.0 363.7 L561.7 362.7 L563.0 365.9Z" fill="#fff" fill-opacity=".93"/>
<path d="M578.8 418.8 L580.8 421.5 L582.8 418.8Z" fill="#4cb250"/>
<circle cx="580.8" cy="414.6" r="4.9" fill="#4cb250"/>
<path d="M578.2 417.0 L580.4 411.8 L581.6 414.8 L582.3 413.8 L583.6 417.0Z" fill="#fff" fill-opacity=".93"/>
<path d="M491.7 444.8 L493.7 447.5 L495.7 444.8Z" fill="#4cb250"/>
<circle cx="493.7" cy="440.6" r="4.9" fill="#4cb250"/>
<path d="M491.1 443.0 L493.3 437.8 L494.5 440.8 L495.2 439.8 L496.5 443.0Z" fill="#fff" fill-opacity=".93"/>
<path d="M772.3 374.8 L774.3 377.5 L776.3 374.8Z" fill="#4cb250"/>
<circle cx="774.3" cy="370.6" r="4.9" fill="#4cb250"/>
<path d="M771.7 373.0 L773.9 367.8 L775.1 370.8 L775.8 369.8 L777.1 373.0Z" fill="#fff" fill-opacity=".93"/>
<path d="M712.3 435.2 L714.3 437.9 L716.3 435.2Z" fill="#4cb250"/>
<circle cx="714.3" cy="431.0" r="4.9" fill="#4cb250"/>
<path d="M711.7 433.4 L713.9 428.2 L715.1 431.2 L715.8 430.2 L717.1 433.4Z" fill="#fff" fill-opacity=".93"/>
<path d="M755.4 441.2 L757.4 443.9 L759.4 441.2Z" fill="#4cb250"/>
<circle cx="757.4" cy="437.0" r="4.9" fill="#4cb250"/>
<path d="M754.8 439.4 L757.0 434.2 L758.2 437.2 L758.9 436.2 L760.2 439.4Z" fill="#fff" fill-opacity=".93"/>
<path d="M779.8 451.4 L781.8 454.1 L783.8 451.4Z" fill="#4cb250"/>
<circle cx="781.8" cy="447.2" r="4.9" fill="#4cb250"/>
<path d="M779.2 449.6 L781.4 444.4 L782.6 447.4 L783.3 446.4 L784.6 449.6Z" fill="#fff" fill-opacity=".93"/>
<path d="M837.8 443.0 L839.8 445.7 L841.8 443.0Z" fill="#4cb250"/>
<circle cx="839.8" cy="438.8" r="4.9" fill="#4cb250"/>
<path d="M837.2 441.2 L839.4 436.0 L840.6 439.0 L841.3 438.0 L842.6 441.2Z" fill="#fff" fill-opacity=".93"/>
<path d="M872.5 410.4 L874.5 413.1 L876.5 410.4Z" fill="#4cb250"/>
<circle cx="874.5" cy="406.2" r="4.9" fill="#4cb250"/>
<path d="M871.9 408.6 L874.1 403.4 L875.3 406.4 L876.0 405.4 L877.3 408.6Z" fill="#fff" fill-opacity=".93"/>
<path d="M947.3 385.5 L949.3 388.2 L951.3 385.5Z" fill="#4cb250"/>
<circle cx="949.3" cy="381.3" r="4.9" fill="#4cb250"/>
<path d="M946.7 383.7 L948.9 378.5 L950.1 381.5 L950.8 380.5 L952.1 383.7Z" fill="#fff" fill-opacity=".93"/>
<path d="M923.0 400.1 L925.0 402.8 L927.0 400.1Z" fill="#4cb250"/>
<circle cx="925.0" cy="395.9" r="4.9" fill="#4cb250"/>
<path d="M922.4 398.3 L924.6 393.1 L925.8 396.1 L926.5 395.1 L927.8 398.3Z" fill="#fff" fill-opacity=".93"/>
<path d="M932.7 413.6 L934.7 416.3 L936.7 413.6Z" fill="#4cb250"/>
<circle cx="934.7" cy="409.4" r="4.9" fill="#4cb250"/>
<path d="M932.1 411.8 L934.3 406.6 L935.5 409.6 L936.2 408.6 L937.5 411.8Z" fill="#fff" fill-opacity=".93"/>
<path d="M982.9 404.2 L984.9 406.9 L986.9 404.2Z" fill="#4cb250"/>
<circle cx="984.9" cy="400.0" r="4.9" fill="#4cb250"/>
<path d="M982.3 402.4 L984.5 397.2 L985.7 400.2 L986.4 399.2 L987.7 402.4Z" fill="#fff" fill-opacity=".93"/>
<path d="M695.4 472.2 L697.4 474.9 L699.4 472.2Z" fill="#4cb250"/>
<circle cx="697.4" cy="468.0" r="4.9" fill="#4cb250"/>
<path d="M694.8 470.4 L697.0 465.2 L698.2 468.2 L698.9 467.2 L700.2 470.4Z" fill="#fff" fill-opacity=".93"/>
<path d="M730.2 499.7 L732.2 502.4 L734.2 499.7Z" fill="#4cb250"/>
<circle cx="732.2" cy="495.5" r="4.9" fill="#4cb250"/>
<path d="M729.6 497.9 L731.8 492.7 L733.0 495.7 L733.7 494.7 L735.0 497.9Z" fill="#fff" fill-opacity=".93"/>
<path d="M789.5 501.9 L791.5 504.6 L793.5 501.9Z" fill="#4cb250"/>
<circle cx="791.5" cy="497.7" r="4.9" fill="#4cb250"/>
<path d="M788.9 500.1 L791.1 494.9 L792.3 497.9 L793.0 496.9 L794.3 500.1Z" fill="#fff" fill-opacity=".93"/>
<path d="M818.6 499.2 L820.6 501.9 L822.6 499.2Z" fill="#4cb250"/>
<circle cx="820.6" cy="495.0" r="4.9" fill="#4cb250"/>
<path d="M818.0 497.4 L820.2 492.2 L821.4 495.2 L822.1 494.2 L823.4 497.4Z" fill="#fff" fill-opacity=".93"/>
<path d="M955.8 500.4 L957.8 503.1 L959.8 500.4Z" fill="#4cb250"/>
<circle cx="957.8" cy="496.2" r="4.9" fill="#4cb250"/>
<path d="M955.2 498.6 L957.4 493.4 L958.6 496.4 L959.3 495.4 L960.6 498.6Z" fill="#fff" fill-opacity=".93"/>
<path d="M1059.9 523.2 L1061.9 525.9 L1063.9 523.2Z" fill="#4cb250"/>
<circle cx="1061.9" cy="519.0" r="4.9" fill="#4cb250"/>
<path d="M1059.3 521.4 L1061.5 516.2 L1062.7 519.2 L1063.4 518.2 L1064.7 521.4Z" fill="#fff" fill-opacity=".93"/>
<rect x="755.0" y="89.6" width="8.2" height="3.9" rx="1.95" fill="#ee4f59"/><text x="759.1" y="92.6" font-size="2.9" fill="#fff" text-anchor="middle" font-weight="bold">HOT</text>
<rect x="675.0" y="204.2" width="8.2" height="3.9" rx="1.95" fill="#ee4f59"/><text x="679.1" y="207.2" font-size="2.9" fill="#fff" text-anchor="middle" font-weight="bold">HOT</text>
<rect x="1027.0" y="262.0" width="8.2" height="3.9" rx="1.95" fill="#ee4f59"/><text x="1031.1" y="265.0" font-size="2.9" fill="#fff" text-anchor="middle" font-weight="bold">HOT</text>
<rect x="1040.0" y="237.8" width="8.2" height="3.9" rx="1.95" fill="#ee4f59"/><text x="1044.1" y="240.8" font-size="2.9" fill="#fff" text-anchor="middle" font-weight="bold">HOT</text>
<rect x="698.6" y="462.4" width="8.2" height="3.9" rx="1.95" fill="#ee4f59"/><text x="702.7" y="465.4" font-size="2.9" fill="#fff" text-anchor="middle" font-weight="bold">HOT</text>
<g><ellipse cx="829" cy="251.6" rx="12.3" ry="4.9" fill="#3ccd72"/><path d="M819 250.6 q3 -4.6 6.4 -2.2 l.6 2.8z M832.6 250 q2.6 -4.8 7.2 -1 l-1 2.6z" fill="#8fd6f0"/><ellipse cx="829" cy="253.3" rx="10.6" ry="2.4" fill="#59da8a"/><rect x="825.8" y="246.6" width="6.4" height="6.6" rx="1.6" fill="#1d1d1d"/><rect x="827" y="246" width="3.9" height="2.9" rx="1.3" fill="#fff"/><circle cx="826.9" cy="246.3" r=".8" fill="#1d1d1d"/><circle cx="831" cy="246.3" r=".8" fill="#1d1d1d"/><rect x="828.3" y="251" width="1.5" height="2.2" fill="#e9f9ee"/><rect x="834" y="247.2" width="2" height="2.6" rx=".6" fill="#c98a4a"/><ellipse cx="822.6" cy="250.6" rx="1.3" ry=".9" fill="#f3f3f3"/></g>
<text x="498.8" y="109.7" font-size="6.75" fill="#4a4a4a" font-weight="normal" text-anchor="start" stroke="#f5f3f0" stroke-width="1.1" paint-order="stroke" stroke-linejoin="round">创新工业园</text>
<text x="527.5" y="167.4" font-size="6.75" fill="#4a4a4a" font-weight="normal" text-anchor="start" stroke="#f5f3f0" stroke-width="1.1" paint-order="stroke" stroke-linejoin="round">光兆科学园</text>
<text x="923.0" y="125.4" font-size="6.75" fill="#4a4a4a" font-weight="normal" text-anchor="start" stroke="#f5f3f0" stroke-width="1.1" paint-order="stroke" stroke-linejoin="round">朱台工业园</text>
<text x="766.8" y="156.2" font-size="6.75" fill="#4a4a4a" font-weight="normal" text-anchor="start" stroke="#f5f3f0" stroke-width="1.1" paint-order="stroke" stroke-linejoin="round">山东工业</text>
<text x="767.0" y="163.1" font-size="6.75" fill="#4a4a4a" font-weight="normal" text-anchor="start" stroke="#f5f3f0" stroke-width="1.1" paint-order="stroke" stroke-linejoin="round">职业学院</text>
<text x="704.6" y="171.4" font-size="6.75" fill="#4a4a4a" font-weight="normal" text-anchor="start" stroke="#f5f3f0" stroke-width="1.1" paint-order="stroke" stroke-linejoin="round">淄博科学城</text>
<text x="707.8" y="178.6" font-size="6.75" fill="#4a4a4a" font-weight="normal" text-anchor="start" stroke="#f5f3f0" stroke-width="1.1" paint-order="stroke" stroke-linejoin="round">科创中心</text>
<text x="797.7" y="204.3" font-size="6.75" fill="#4a4a4a" font-weight="normal" text-anchor="start" stroke="#f5f3f0" stroke-width="1.1" paint-order="stroke" stroke-linejoin="round">淄博高新区</text>
<text x="609.9" y="215.1" font-size="6.75" fill="#4a4a4a" font-weight="normal" text-anchor="start" stroke="#f5f3f0" stroke-width="1.1" paint-order="stroke" stroke-linejoin="round">淄博职业学院</text>
<text x="610.8" y="222.6" font-size="6.75" fill="#4a4a4a" font-weight="normal" text-anchor="start" stroke="#f5f3f0" stroke-width="1.1" paint-order="stroke" stroke-linejoin="round">(西校区)</text>
<text x="579.0" y="241.4" font-size="6.75" fill="#4a4a4a" font-weight="normal" text-anchor="start" stroke="#f5f3f0" stroke-width="1.1" paint-order="stroke" stroke-linejoin="round">齐鲁医药学院</text>
<text x="586.4" y="249.2" font-size="6.75" fill="#4a4a4a" font-weight="normal" text-anchor="start" stroke="#f5f3f0" stroke-width="1.1" paint-order="stroke" stroke-linejoin="round">(新校区)</text>
<text x="663.5" y="260.8" font-size="6.75" fill="#4a4a4a" font-weight="normal" text-anchor="start" stroke="#f5f3f0" stroke-width="1.1" paint-order="stroke" stroke-linejoin="round">山东理工大学</text>
<text x="539.0" y="280.4" font-size="6.75" fill="#4a4a4a" font-weight="normal" text-anchor="start" stroke="#f5f3f0" stroke-width="1.1" paint-order="stroke" stroke-linejoin="round">方达电子商务园</text>
<text x="600.0" y="298.1" font-size="6.75" fill="#4a4a4a" font-weight="normal" text-anchor="start" stroke="#f5f3f0" stroke-width="1.1" paint-order="stroke" stroke-linejoin="round">李家工业园</text>
<text x="812.7" y="267.4" font-size="6.75" fill="#4a4a4a" font-weight="normal" text-anchor="start" stroke="#f5f3f0" stroke-width="1.1" paint-order="stroke" stroke-linejoin="round">淄博动物园</text>
<text x="828.6" y="341.2" font-size="6.75" fill="#4a4a4a" font-weight="normal" text-anchor="start" stroke="#f5f3f0" stroke-width="1.1" paint-order="stroke" stroke-linejoin="round">齐翔腾达</text>
<text x="825.2" y="348.7" font-size="6.75" fill="#4a4a4a" font-weight="normal" text-anchor="start" stroke="#f5f3f0" stroke-width="1.1" paint-order="stroke" stroke-linejoin="round">工业园南区</text>
<text x="741.5" y="356.7" font-size="6.75" fill="#4a4a4a" font-weight="normal" text-anchor="start" stroke="#f5f3f0" stroke-width="1.1" paint-order="stroke" stroke-linejoin="round">天佳物流园</text>
<text x="853.0" y="313.3" font-size="6.75" fill="#4a4a4a" font-weight="normal" text-anchor="start" stroke="#f5f3f0" stroke-width="1.1" paint-order="stroke" stroke-linejoin="round">王家山</text>
<text x="893.0" y="311.8" font-size="6.75" fill="#4a4a4a" font-weight="normal" text-anchor="start" stroke="#f5f3f0" stroke-width="1.1" paint-order="stroke" stroke-linejoin="round">大山</text>
<text x="1062.6" y="333.6" font-size="6.75" fill="#4a4a4a" font-weight="normal" text-anchor="start" stroke="#f5f3f0" stroke-width="1.1" paint-order="stroke" stroke-linejoin="round">明祖</text>
<text x="884.7" y="354.8" font-size="6.75" fill="#4a4a4a" font-weight="normal" text-anchor="start" stroke="#f5f3f0" stroke-width="1.1" paint-order="stroke" stroke-linejoin="round">卧虎山</text>
<text x="519.2" y="358.7" font-size="6.75" fill="#4a4a4a" font-weight="normal" text-anchor="start" stroke="#f5f3f0" stroke-width="1.1" paint-order="stroke" stroke-linejoin="round">卧虎山</text>
<text x="587.4" y="418.0" font-size="6.75" fill="#4a4a4a" font-weight="normal" text-anchor="start" stroke="#f5f3f0" stroke-width="1.1" paint-order="stroke" stroke-linejoin="round">焕山</text>
<text x="586.4" y="428.6" font-size="6.75" fill="#4a4a4a" font-weight="normal" text-anchor="start" stroke="#f5f3f0" stroke-width="1.1" paint-order="stroke" stroke-linejoin="round">淄博师范高等</text>
<text x="587.0" y="435.6" font-size="6.75" fill="#4a4a4a" font-weight="normal" text-anchor="start" stroke="#f5f3f0" stroke-width="1.1" paint-order="stroke" stroke-linejoin="round">专科学校</text>
<text x="662.3" y="418.0" font-size="6.75" fill="#4a4a4a" font-weight="normal" text-anchor="start" stroke="#f5f3f0" stroke-width="1.1" paint-order="stroke" stroke-linejoin="round">双凤工业园</text>
<text x="497.9" y="444.4" font-size="6.75" fill="#4a4a4a" font-weight="normal" text-anchor="start" stroke="#f5f3f0" stroke-width="1.1" paint-order="stroke" stroke-linejoin="round">冲山</text>
<text x="769.0" y="383.7" font-size="6.75" fill="#4a4a4a" font-weight="normal" text-anchor="start" stroke="#f5f3f0" stroke-width="1.1" paint-order="stroke" stroke-linejoin="round">黉山</text>
<text x="751.8" y="450.2" font-size="6.75" fill="#4a4a4a" font-weight="normal" text-anchor="start" stroke="#f5f3f0" stroke-width="1.1" paint-order="stroke" stroke-linejoin="round">桃山</text>
<text x="787.8" y="450.4" font-size="6.75" fill="#4a4a4a" font-weight="normal" text-anchor="start" stroke="#f5f3f0" stroke-width="1.1" paint-order="stroke" stroke-linejoin="round">南羊岭</text>
<text x="847.0" y="441.7" font-size="6.75" fill="#4a4a4a" font-weight="normal" text-anchor="start" stroke="#f5f3f0" stroke-width="1.1" paint-order="stroke" stroke-linejoin="round">大北山</text>
<text x="881.0" y="409.4" font-size="6.75" fill="#4a4a4a" font-weight="normal" text-anchor="start" stroke="#f5f3f0" stroke-width="1.1" paint-order="stroke" stroke-linejoin="round">虎山</text>
<text x="955.8" y="384.6" font-size="6.75" fill="#4a4a4a" font-weight="normal" text-anchor="start" stroke="#f5f3f0" stroke-width="1.1" paint-order="stroke" stroke-linejoin="round">中山头</text>
<text x="931.5" y="399.2" font-size="6.75" fill="#4a4a4a" font-weight="normal" text-anchor="start" stroke="#f5f3f0" stroke-width="1.1" paint-order="stroke" stroke-linejoin="round">香炉山</text>
<text x="940.9" y="412.7" font-size="6.75" fill="#4a4a4a" font-weight="normal" text-anchor="start" stroke="#f5f3f0" stroke-width="1.1" paint-order="stroke" stroke-linejoin="round">仙西顶</text>
<text x="723.3" y="507.9" font-size="6.75" fill="#4a4a4a" font-weight="normal" text-anchor="start" stroke="#f5f3f0" stroke-width="1.1" paint-order="stroke" stroke-linejoin="round">青风岭</text>
<text x="798.7" y="501.0" font-size="6.75" fill="#4a4a4a" font-weight="normal" text-anchor="start" stroke="#f5f3f0" stroke-width="1.1" paint-order="stroke" stroke-linejoin="round">扎山</text>
<text x="827.0" y="498.6" font-size="6.75" fill="#4a4a4a" font-weight="normal" text-anchor="start" stroke="#f5f3f0" stroke-width="1.1" paint-order="stroke" stroke-linejoin="round">南寨顶</text>
<text x="964.8" y="499.4" font-size="6.75" fill="#4a4a4a" font-weight="normal" text-anchor="start" stroke="#f5f3f0" stroke-width="1.1" paint-order="stroke" stroke-linejoin="round">曹峪顶</text>
<text x="549.6" y="524.2" font-size="6.75" fill="#4a4a4a" font-weight="normal" text-anchor="start" stroke="#f5f3f0" stroke-width="1.1" paint-order="stroke" stroke-linejoin="round">昆仑党建文化</text>
<text x="562.0" y="531.8" font-size="6.75" fill="#4a4a4a" font-weight="normal" text-anchor="start" stroke="#f5f3f0" stroke-width="1.1" paint-order="stroke" stroke-linejoin="round">主题广场</text>
<text x="1047.6" y="246.4" font-size="6.75" fill="#4a4a4a" font-weight="normal" text-anchor="start" stroke="#f5f3f0" stroke-width="1.1" paint-order="stroke" stroke-linejoin="round">齐文化博物院</text>
<text x="1052.0" y="531.0" font-size="6.75" fill="#4a4a4a" font-weight="normal" text-anchor="start" stroke="#f5f3f0" stroke-width="1.1" paint-order="stroke" stroke-linejoin="round">四子山</text>
<text x="793.4" y="94.0" font-size="6.75" fill="#4a78de" font-weight="normal" text-anchor="start" stroke="#f5f3f0" stroke-width="1.1" paint-order="stroke" stroke-linejoin="round">桓台站</text>
<text x="760.2" y="124.4" font-size="6.75" fill="#4a78de" font-weight="normal" text-anchor="start" stroke="#f5f3f0" stroke-width="1.1" paint-order="stroke" stroke-linejoin="round">中国石油</text>
<text x="714.3" y="146.4" font-size="6.75" fill="#4a78de" font-weight="normal" text-anchor="start" stroke="#f5f3f0" stroke-width="1.1" paint-order="stroke" stroke-linejoin="round">淄博北站</text>
<text x="1019.5" y="133.7" font-size="6.75" fill="#4a78de" font-weight="normal" text-anchor="start" stroke="#f5f3f0" stroke-width="1.1" paint-order="stroke" stroke-linejoin="round">临淄北站</text>
<text x="728.0" y="285.6" font-size="6.75" fill="#4a78de" font-weight="normal" text-anchor="start" stroke="#f5f3f0" stroke-width="1.1" paint-order="stroke" stroke-linejoin="round">淄博站</text>
<text x="800.9" y="297.2" font-size="6.75" fill="#4a78de" font-weight="normal" text-anchor="start" stroke="#f5f3f0" stroke-width="1.1" paint-order="stroke" stroke-linejoin="round">湖田站</text>
<text x="764.0" y="98.7" font-size="6.75" fill="#3a9c4d" font-weight="normal" text-anchor="start" stroke="#f5f3f0" stroke-width="1.1" paint-order="stroke" stroke-linejoin="round">红莲湖</text>
<text x="990.5" y="149.6" font-size="6.75" fill="#3a9c4d" font-weight="normal" text-anchor="start" stroke="#f5f3f0" stroke-width="1.1" paint-order="stroke" stroke-linejoin="round">运粮河湿地公园</text>
<text x="679.5" y="212.7" font-size="6.75" fill="#3a9c4d" font-weight="normal" text-anchor="start" stroke="#f5f3f0" stroke-width="1.1" paint-order="stroke" stroke-linejoin="round">齐盛湖公园</text>
<text x="828.2" y="171.4" font-size="6.75" fill="#3a9c4d" font-weight="normal" text-anchor="start" stroke="#f5f3f0" stroke-width="1.1" paint-order="stroke" stroke-linejoin="round">佛山公园</text>
<text x="778.0" y="240.8" font-size="6.75" fill="#3a9c4d" font-weight="normal" text-anchor="start" stroke="#f5f3f0" stroke-width="1.1" paint-order="stroke" stroke-linejoin="round">花山公园</text>
<text x="544.0" y="376.6" font-size="6.75" fill="#3a9c4d" font-weight="normal" text-anchor="start" stroke="#f5f3f0" stroke-width="1.1" paint-order="stroke" stroke-linejoin="round">文昌湖旅游</text>
<text x="550.9" y="383.1" font-size="6.75" fill="#3a9c4d" font-weight="normal" text-anchor="start" stroke="#f5f3f0" stroke-width="1.1" paint-order="stroke" stroke-linejoin="round">度假区</text>
<text x="691.9" y="443.6" font-size="6.75" fill="#3a9c4d" font-weight="normal" text-anchor="start" stroke="#f5f3f0" stroke-width="1.1" paint-order="stroke" stroke-linejoin="round">淄博市黉山风景</text>
<text x="698.4" y="450.4" font-size="6.75" fill="#3a9c4d" font-weight="normal" text-anchor="start" stroke="#f5f3f0" stroke-width="1.1" paint-order="stroke" stroke-linejoin="round">名胜旅游区</text>
<text x="990.9" y="403.4" font-size="6.75" fill="#3a9c4d" font-weight="normal" text-anchor="start" stroke="#f5f3f0" stroke-width="1.1" paint-order="stroke" stroke-linejoin="round">青州雀山风景区</text>
<text x="706.7" y="471.4" font-size="6.75" fill="#3a9c4d" font-weight="normal" text-anchor="start" stroke="#f5f3f0" stroke-width="1.1" paint-order="stroke" stroke-linejoin="round">淄博聊斋旅游区</text>
<text x="1008.3" y="284.0" font-size="7.4" fill="#3a9c4d" font-weight="normal" text-anchor="start" stroke="#f5f3f0" stroke-width="1.6" paint-order="stroke" stroke-linejoin="round">管仲纪念馆</text>
<text x="493.9" y="327.7" font-size="6.6" fill="#4a4a4a" font-weight="normal" text-anchor="start" stroke="#f5f3f0" stroke-width="1.2" paint-order="stroke" stroke-linejoin="round">山</text>
<path d="M508 498 V501.4 H575.2 V498" fill="none" stroke="#7d7d7d" stroke-width="1.1"/>
<g><ellipse cx="537.3" cy="493.4" rx="2.9" ry="2.6" fill="#3468d8"/><rect x="539.6" y="491.6" width="5.6" height="3.9" rx=".8" fill="#2f62d0"/><circle cx="536.6" cy="492.8" r=".9" fill="#fff"/></g>
<g><rect x="507" y="91" width="14.8" height="14.8" fill="#000" opacity=".10"/><rect x="506.4" y="90.1" width="14.9" height="14.6" fill="#fff"/>
<g stroke="#3f8ae6" fill="none" stroke-linecap="round"><path d="M508.5 93.4 L513.7 98.5" stroke-width="1.7"/><path d="M514.7 99.4 L517.9 102.6" stroke-width="2.7"/><path d="M514.9 99.6 L517.7 102.4" stroke="#fff" stroke-width="1"/><path d="M509.8 100.9 L515.4 95.2" stroke-width="1.7"/><path d="M514.9 92.7 a2.2 2.2 0 1 0 3.5 3.1" stroke-width="1.3"/><circle cx="508.9" cy="101.9" r="1.6" stroke-width="1.1"/></g></g>
<g><rect x="941.4" y="68.6" width="122.4" height="16.6" rx="2" fill="#000" opacity=".14"/><rect x="940.9" y="67.5" width="122.6" height="16.4" rx="2" fill="#fff"/>
<rect x="942.7" y="71.2" width="12.4" height="1.8" fill="#3f84dd"/><rect x="942.7" y="75.2" width="12.4" height="1.8" fill="#3078d6"/><rect x="942.7" y="79.2" width="12.4" height="1.9" fill="#1d62c4"/>
<text x="958.7" y="79.4" font-size="7.8" fill="#5a5a5a">兴趣点</text></g>
</svg>
<!--/MAPSVG-->
</div>

<!-- bottom strip + widget -->
<div class="abs" style="left:122.7px;top:528.6px;width:957.3px;height:5.4px;background:#e4ecf8"></div>
<div class="abs" style="left:1074.2px;top:505px;width:6px;height:29px;background:#3b4046;border-radius:1.5px 0 0 0"><div class="abs" style="left:2px;top:19.5px;width:2.4px;height:2.6px;background:#58d36a;border-radius:1px"></div><div class="abs" style="left:2px;top:24px;width:2.4px;height:2.6px;background:#34c26c;border-radius:1px"></div></div>
</body>
</html>
